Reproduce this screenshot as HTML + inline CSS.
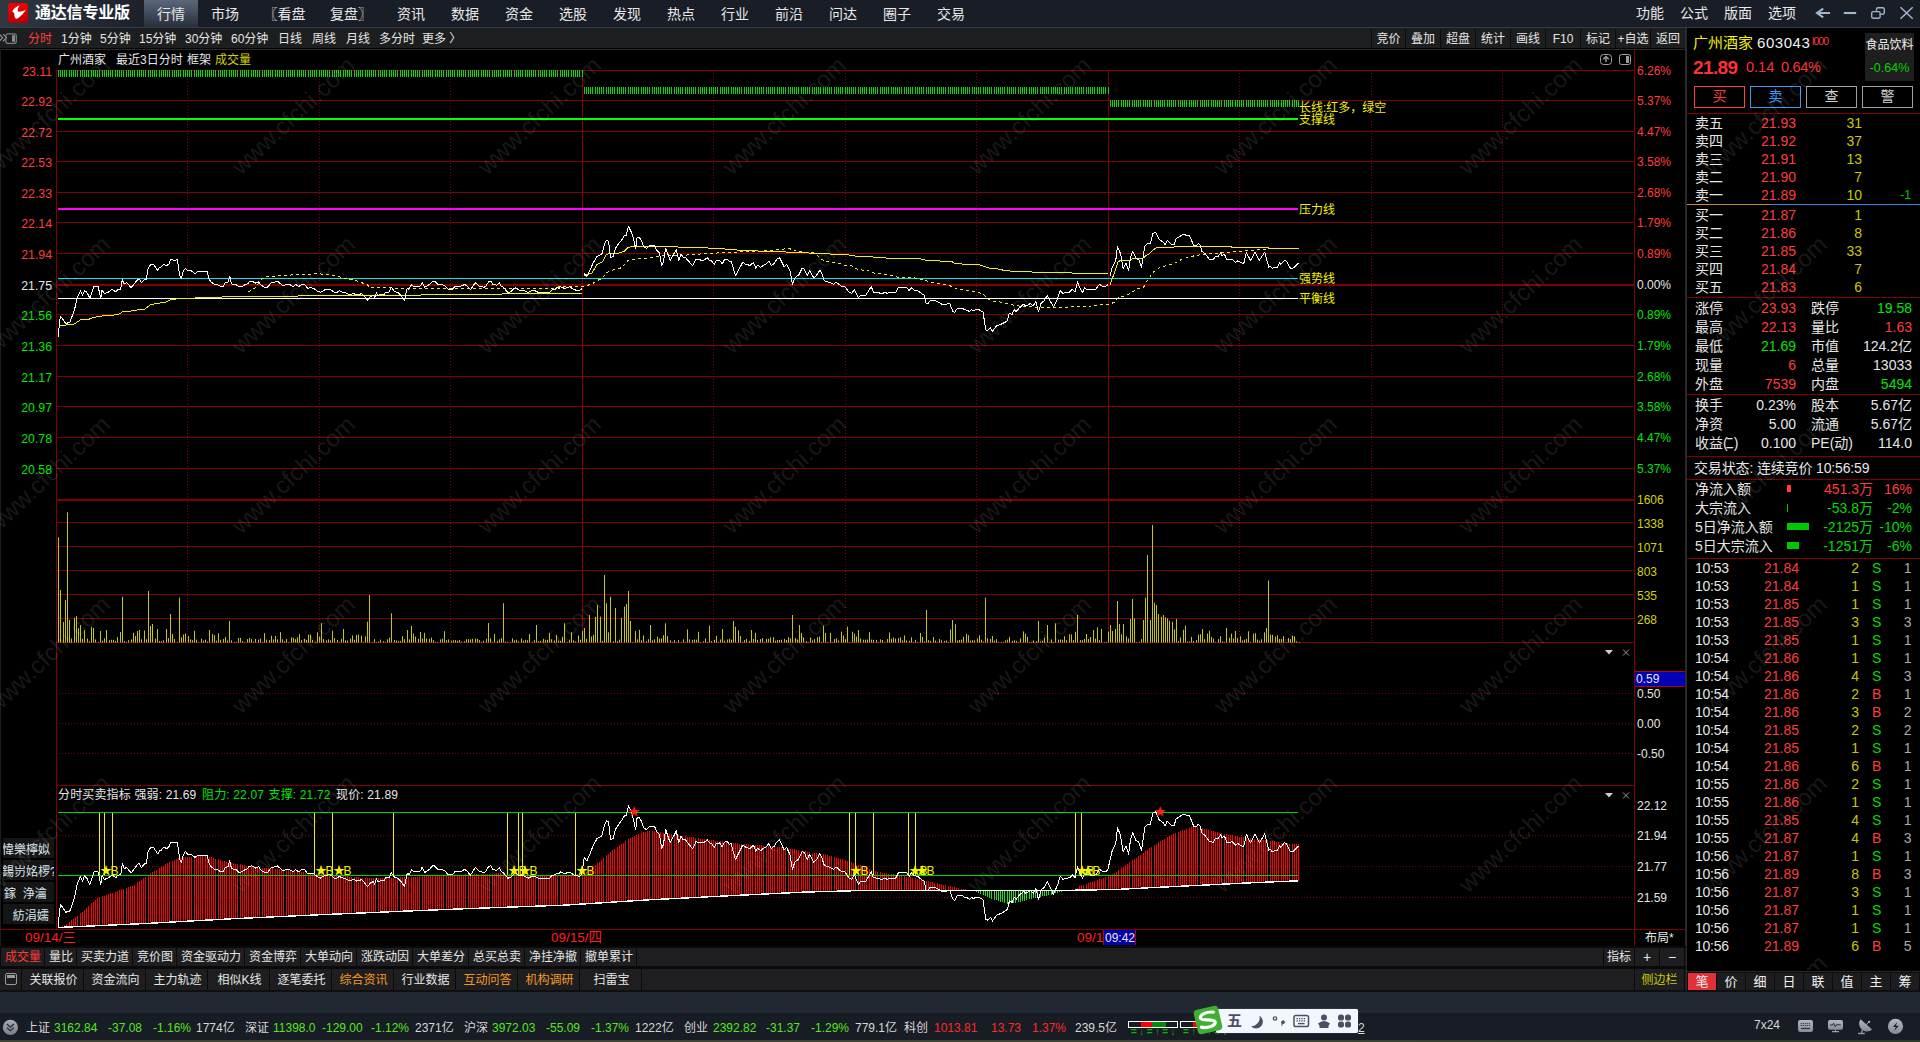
<!DOCTYPE html><html lang="zh-CN"><head><meta charset="utf-8"><title>通达信专业版</title><style>
html,body{margin:0;padding:0;background:#000;}
body{width:1920px;height:1042px;overflow:hidden;position:relative;font-family:"Liberation Sans","Noto Sans CJK SC",sans-serif;}
.t{position:absolute;white-space:nowrap;line-height:1;}
.r{position:absolute;}
svg{position:absolute;left:0;top:0;}
.b{font-weight:bold;}
.wm{position:absolute;white-space:nowrap;line-height:1;font-size:24px;color:rgba(255,255,255,0.115);transform-origin:0 20px;transform:rotate(-43.2deg);}
</style></head><body>
<div class="r" style="left:0px;top:0px;width:1920px;height:27px;background:#191d26;background:linear-gradient(90deg,#2f3843 0px,#272e38 60px,#1d212a 140px,#191d26 200px,#191d26 100%);"></div>
<div class="r" style="left:0px;top:27px;width:1920px;height:1px;background:#343c48;"></div>
<div class="r" style="left:144px;top:0px;width:54px;height:27px;background:#3a4350;background:linear-gradient(180deg,#5b677a 0%,#414b5b 50%,#29303b 100%);"></div>
<svg width="40" height="28" viewBox="0 0 40 28"><defs><linearGradient id="lg" x1="0" y1="0" x2="0" y2="1"><stop offset="0" stop-color="#f40000"/><stop offset="1" stop-color="#b80000"/></linearGradient></defs><rect x="8" y="3" width="20" height="20" rx="3" fill="url(#lg)"/><path d="M20 5.2 C16.5 6.2 13.2 8.6 12.2 11.6 C13 12.4 13.8 12.6 14.3 13.4 C14.2 15.2 14.6 17.2 15.6 18.6 C16.4 18.9 17.6 18.7 18.4 18 C21 15.8 24.2 12.6 26 9.4 C23.8 10.8 21 11.9 18 11.6 C17.2 9.6 18.2 7 20 5.2 Z" fill="#fff"/></svg>
<div class="t " style="left:35px;top:4.5px;color:#ffffff;font-size:16px;font-weight:bold;letter-spacing:-0.2px;">通达信专业版</div>
<div class="t " style="left:157px;top:7px;color:#e8e8e8;font-size:14px;">行情</div>
<div class="t " style="left:211px;top:7px;color:#e8e8e8;font-size:14px;">市场</div>
<div class="t " style="left:263.5px;top:7px;color:#e8e8e8;font-size:14px;">〖看盘</div>
<div class="t " style="left:330px;top:7px;color:#e8e8e8;font-size:14px;">复盘〗</div>
<div class="t " style="left:397px;top:7px;color:#e8e8e8;font-size:14px;">资讯</div>
<div class="t " style="left:451px;top:7px;color:#e8e8e8;font-size:14px;">数据</div>
<div class="t " style="left:505px;top:7px;color:#e8e8e8;font-size:14px;">资金</div>
<div class="t " style="left:559px;top:7px;color:#e8e8e8;font-size:14px;">选股</div>
<div class="t " style="left:613px;top:7px;color:#e8e8e8;font-size:14px;">发现</div>
<div class="t " style="left:667px;top:7px;color:#e8e8e8;font-size:14px;">热点</div>
<div class="t " style="left:721px;top:7px;color:#e8e8e8;font-size:14px;">行业</div>
<div class="t " style="left:775px;top:7px;color:#e8e8e8;font-size:14px;">前沿</div>
<div class="t " style="left:829px;top:7px;color:#e8e8e8;font-size:14px;">问达</div>
<div class="t " style="left:883px;top:7px;color:#e8e8e8;font-size:14px;">圈子</div>
<div class="t " style="left:937px;top:7px;color:#e8e8e8;font-size:14px;">交易</div>
<div class="t " style="left:1636px;top:6px;color:#e8e8e8;font-size:14px;">功能</div>
<div class="t " style="left:1680px;top:6px;color:#e8e8e8;font-size:14px;">公式</div>
<div class="t " style="left:1724px;top:6px;color:#e8e8e8;font-size:14px;">版面</div>
<div class="t " style="left:1768px;top:6px;color:#e8e8e8;font-size:14px;">选项</div>
<svg width="1920" height="28" viewBox="0 0 1920 28" fill="none" stroke="#a4b4ce" stroke-width="2"><path d="M1830 13 H1818 M1823.2 8.6 L1817 13 L1823.2 17.4" stroke-width="2.1" stroke-linejoin="miter"/><path d="M1843.8 13 H1856.2" stroke-width="2.1"/><path d="M1876.5 10.8 V9.2 a1.4 1.4 0 0 1 1.4 -1.4 h5 a1.4 1.4 0 0 1 1.4 1.4 v3.6 a1.4 1.4 0 0 1 -1.4 1.4 h-1.8" stroke-width="1.4"/><rect x="1871.7" y="11.6" width="8.4" height="6.6" rx="1.4" stroke-width="1.4"/><path d="M1900.5 7.2 L1912.7 18.8 M1912.7 7.2 L1900.5 18.8" stroke-width="1.5"/></svg>
<div class="r" style="left:0px;top:28px;width:1686px;height:20px;background:#1d1e20;"></div>
<div class="r" style="left:0px;top:48px;width:1686px;height:1px;background:#060606;"></div>
<div class="r" style="left:0px;top:49px;width:1686px;height:1px;background:#2a2a2a;"></div>
<svg width="30" height="50" viewBox="0 0 30 50" fill="none" stroke="#7e7e7e" stroke-width="1.2"><path d="M-0.8 34 l3.4 3.7 l-3.4 3.7 M3 34 l3.4 3.7 l-3.4 3.7" stroke="#9c9c9c" stroke-width="1.1"/><rect x="5.9" y="33.9" width="10.4" height="9.4" rx="2"/><rect x="12" y="35.2" width="3" height="6.6" fill="#8a8a8a" stroke="none"/></svg>
<div class="t " style="left:28px;top:33px;color:#ff3c3c;font-size:12px;">分时</div>
<div class="t " style="left:61px;top:33px;color:#e6e6e6;font-size:12px;">1分钟</div>
<div class="t " style="left:100px;top:33px;color:#e6e6e6;font-size:12px;">5分钟</div>
<div class="t " style="left:139px;top:33px;color:#e6e6e6;font-size:12px;">15分钟</div>
<div class="t " style="left:185px;top:33px;color:#e6e6e6;font-size:12px;">30分钟</div>
<div class="t " style="left:231px;top:33px;color:#e6e6e6;font-size:12px;">60分钟</div>
<div class="t " style="left:278px;top:33px;color:#e6e6e6;font-size:12px;">日线</div>
<div class="t " style="left:312px;top:33px;color:#e6e6e6;font-size:12px;">周线</div>
<div class="t " style="left:346px;top:33px;color:#e6e6e6;font-size:12px;">月线</div>
<div class="t " style="left:379px;top:33px;color:#e6e6e6;font-size:12px;">多分时</div>
<div class="t " style="left:422px;top:33px;color:#e6e6e6;font-size:12px;">更多 〉</div>
<div class="r" style="left:1371px;top:29px;width:1px;height:19px;background:#0c0c0c;"></div>
<div class="t " style="left:1372px;top:33px;color:#e6e6e6;font-size:12px;width:33px;text-align:center;">竞价</div>
<div class="r" style="left:1405px;top:29px;width:1px;height:19px;background:#0c0c0c;"></div>
<div class="t " style="left:1406px;top:33px;color:#e6e6e6;font-size:12px;width:34px;text-align:center;">叠加</div>
<div class="r" style="left:1440px;top:29px;width:1px;height:19px;background:#0c0c0c;"></div>
<div class="t " style="left:1441px;top:33px;color:#e6e6e6;font-size:12px;width:34px;text-align:center;">超盘</div>
<div class="r" style="left:1475px;top:29px;width:1px;height:19px;background:#0c0c0c;"></div>
<div class="t " style="left:1476px;top:33px;color:#e6e6e6;font-size:12px;width:34px;text-align:center;">统计</div>
<div class="r" style="left:1510px;top:29px;width:1px;height:19px;background:#0c0c0c;"></div>
<div class="t " style="left:1511px;top:33px;color:#e6e6e6;font-size:12px;width:34px;text-align:center;">画线</div>
<div class="r" style="left:1545px;top:29px;width:1px;height:19px;background:#0c0c0c;"></div>
<div class="t " style="left:1546px;top:33px;color:#e6e6e6;font-size:12px;width:34px;text-align:center;">F10</div>
<div class="r" style="left:1580px;top:29px;width:1px;height:19px;background:#0c0c0c;"></div>
<div class="t " style="left:1581px;top:33px;color:#e6e6e6;font-size:12px;width:34px;text-align:center;">标记</div>
<div class="r" style="left:1615px;top:29px;width:1px;height:19px;background:#0c0c0c;"></div>
<div class="t " style="left:1616px;top:33px;color:#e6e6e6;font-size:12px;width:34px;text-align:center;">+自选</div>
<div class="r" style="left:1650px;top:29px;width:1px;height:19px;background:#0c0c0c;"></div>
<div class="t " style="left:1651px;top:33px;color:#e6e6e6;font-size:12px;width:34px;text-align:center;">返回</div>
<div class="r" style="left:1685px;top:28px;width:1px;height:21px;background:#0c0c0c;"></div>
<svg width="1686" height="946" viewBox="0 0 1686 946"><rect x="0" y="50" width="1" height="896" fill="#1c1c1c"/><rect x="56" y="70" width="1578" height="1" fill="#800000" /><rect x="56" y="100" width="1578" height="1" fill="#800000" /><rect x="56" y="131" width="1578" height="1" fill="#800000" /><rect x="56" y="161" width="1578" height="1" fill="#800000" /><rect x="56" y="192" width="1578" height="1" fill="#800000" /><rect x="56" y="222" width="1578" height="1" fill="#800000" /><rect x="56" y="253" width="1578" height="1" fill="#800000" /><rect x="56" y="314" width="1578" height="1" fill="#800000" /><rect x="56" y="345" width="1578" height="1" fill="#800000" /><rect x="56" y="376" width="1578" height="1" fill="#800000" /><rect x="56" y="406" width="1578" height="1" fill="#800000" /><rect x="56" y="437" width="1578" height="1" fill="#800000" /><rect x="56" y="468" width="1578" height="1" fill="#800000" /><rect x="56" y="284" width="1578" height="2" fill="#800000" /><rect x="56" y="499" width="1578" height="2" fill="#800000" /><rect x="56" y="522" width="1578" height="1" fill="#800000" /><rect x="56" y="546" width="1578" height="1" fill="#800000" /><rect x="56" y="570" width="1578" height="1" fill="#800000" /><rect x="56" y="594" width="1578" height="1" fill="#800000" /><rect x="56" y="618" width="1578" height="1" fill="#800000" /><rect x="56" y="642" width="1578" height="1" fill="#800000" /><rect x="56" y="785" width="1578" height="1" fill="#800000" /><rect x="0" y="929" width="1686" height="1" fill="#800000" /><rect x="56" y="70" width="1" height="859" fill="#800000"/><rect x="1634" y="50" width="1" height="896" fill="#800000"/><rect x="582" y="70" width="1" height="573" fill="#800000"/><rect x="1108" y="70" width="1" height="573" fill="#800000"/><line x1="187.5" y1="79" x2="187.5" y2="642" stroke="#800000" stroke-width="1" stroke-dasharray="1 2" shape-rendering="crispEdges"/><line x1="319.5" y1="79" x2="319.5" y2="642" stroke="#800000" stroke-width="1" stroke-dasharray="1 2" shape-rendering="crispEdges"/><line x1="450.5" y1="79" x2="450.5" y2="642" stroke="#800000" stroke-width="1" stroke-dasharray="1 2" shape-rendering="crispEdges"/><line x1="713.5" y1="73" x2="713.5" y2="642" stroke="#800000" stroke-width="1" stroke-dasharray="1 2" shape-rendering="crispEdges"/><line x1="845.5" y1="73" x2="845.5" y2="642" stroke="#800000" stroke-width="1" stroke-dasharray="1 2" shape-rendering="crispEdges"/><line x1="976.5" y1="73" x2="976.5" y2="642" stroke="#800000" stroke-width="1" stroke-dasharray="1 2" shape-rendering="crispEdges"/><line x1="1239.5" y1="73" x2="1239.5" y2="642" stroke="#800000" stroke-width="1" stroke-dasharray="1 2" shape-rendering="crispEdges"/><line x1="1371.5" y1="73" x2="1371.5" y2="642" stroke="#800000" stroke-width="1" stroke-dasharray="1 2" shape-rendering="crispEdges"/><line x1="1502.5" y1="73" x2="1502.5" y2="642" stroke="#800000" stroke-width="1" stroke-dasharray="1 2" shape-rendering="crispEdges"/><line x1="59" y1="693.5" x2="1634" y2="693.5" stroke="#800000" stroke-width="1" stroke-dasharray="1 2" shape-rendering="crispEdges"/><line x1="59" y1="723.5" x2="1634" y2="723.5" stroke="#800000" stroke-width="1" stroke-dasharray="1 2" shape-rendering="crispEdges"/><line x1="59" y1="753.5" x2="1634" y2="753.5" stroke="#800000" stroke-width="1" stroke-dasharray="1 2" shape-rendering="crispEdges"/><line x1="59" y1="835.5" x2="1634" y2="835.5" stroke="#800000" stroke-width="1" stroke-dasharray="1 2" shape-rendering="crispEdges"/><line x1="59" y1="866.5" x2="1634" y2="866.5" stroke="#800000" stroke-width="1" stroke-dasharray="1 2" shape-rendering="crispEdges"/><line x1="59" y1="897.5" x2="1634" y2="897.5" stroke="#800000" stroke-width="1" stroke-dasharray="1 2" shape-rendering="crispEdges"/><path d="M58 70v7M60 70v7M62 70v7M64 70v7M66 70v7M69 70v7M71 70v7M73 70v7M75 70v7M77 70v7M80 70v7M82 70v7M84 70v7M86 70v7M88 70v7M91 70v7M93 70v7M95 70v7M97 70v7M99 70v7M102 70v7M104 70v7M106 70v7M108 70v7M110 70v7M112 70v7M115 70v7M117 70v7M119 70v7M121 70v7M123 70v7M126 70v7M128 70v7M130 70v7M132 70v7M134 70v7M137 70v7M139 70v7M141 70v7M143 70v7M145 70v7M148 70v7M150 70v7M152 70v7M154 70v7M156 70v7M159 70v7M161 70v7M163 70v7M165 70v7M167 70v7M169 70v7M172 70v7M174 70v7M176 70v7M178 70v7M180 70v7M183 70v7M185 70v7M187 70v7M189 70v7M191 70v7M194 70v7M196 70v7M198 70v7M200 70v7M202 70v7M205 70v7M207 70v7M209 70v7M211 70v7M213 70v7M215 70v7M218 70v7M220 70v7M222 70v7M224 70v7M226 70v7M229 70v7M231 70v7M233 70v7M235 70v7M237 70v7M240 70v7M242 70v7M244 70v7M246 70v7M248 70v7M251 70v7M253 70v7M255 70v7M257 70v7M259 70v7M262 70v7M264 70v7M266 70v7M268 70v7M270 70v7M272 70v7M275 70v7M277 70v7M279 70v7M281 70v7M283 70v7M286 70v7M288 70v7M290 70v7M292 70v7M294 70v7M297 70v7M299 70v7M301 70v7M303 70v7M305 70v7M308 70v7M310 70v7M312 70v7M314 70v7M316 70v7M319 70v7M321 70v7M323 70v7M325 70v7M327 70v7M329 70v7M332 70v7M334 70v7M336 70v7M338 70v7M340 70v7M343 70v7M345 70v7M347 70v7M349 70v7M351 70v7M354 70v7M356 70v7M358 70v7M360 70v7M362 70v7M365 70v7M367 70v7M369 70v7M371 70v7M373 70v7M375 70v7M378 70v7M380 70v7M382 70v7M384 70v7M386 70v7M389 70v7M391 70v7M393 70v7M395 70v7M397 70v7M400 70v7M402 70v7M404 70v7M406 70v7M408 70v7M411 70v7M413 70v7M415 70v7M417 70v7M419 70v7M422 70v7M424 70v7M426 70v7M428 70v7M430 70v7M432 70v7M435 70v7M437 70v7M439 70v7M441 70v7M443 70v7M446 70v7M448 70v7M450 70v7M452 70v7M454 70v7M457 70v7M459 70v7M461 70v7M463 70v7M465 70v7M468 70v7M470 70v7M472 70v7M474 70v7M476 70v7M478 70v7M481 70v7M483 70v7M485 70v7M487 70v7M489 70v7M492 70v7M494 70v7M496 70v7M498 70v7M500 70v7M503 70v7M505 70v7M507 70v7M509 70v7M511 70v7M514 70v7M516 70v7M518 70v7M520 70v7M522 70v7M525 70v7M527 70v7M529 70v7M531 70v7M533 70v7M535 70v7M538 70v7M540 70v7M542 70v7M544 70v7M546 70v7M549 70v7M551 70v7M553 70v7M555 70v7M557 70v7M560 70v7M562 70v7M564 70v7M566 70v7M568 70v7M571 70v7M573 70v7M575 70v7M577 70v7M579 70v7M582 70v7" stroke="#00e000" stroke-width="1" fill="none" shape-rendering="crispEdges" transform="translate(0.5,0)"/><path d="M584 87v7M586 87v7M588 87v7M590 87v7M592 87v7M595 87v7M597 87v7M599 87v7M601 87v7M603 87v7M606 87v7M608 87v7M610 87v7M612 87v7M614 87v7M617 87v7M619 87v7M621 87v7M623 87v7M625 87v7M628 87v7M630 87v7M632 87v7M634 87v7M636 87v7M638 87v7M641 87v7M643 87v7M645 87v7M647 87v7M649 87v7M652 87v7M654 87v7M656 87v7M658 87v7M660 87v7M663 87v7M665 87v7M667 87v7M669 87v7M671 87v7M674 87v7M676 87v7M678 87v7M680 87v7M682 87v7M685 87v7M687 87v7M689 87v7M691 87v7M693 87v7M695 87v7M698 87v7M700 87v7M702 87v7M704 87v7M706 87v7M709 87v7M711 87v7M713 87v7M715 87v7M717 87v7M720 87v7M722 87v7M724 87v7M726 87v7M728 87v7M731 87v7M733 87v7M735 87v7M737 87v7M739 87v7M741 87v7M744 87v7M746 87v7M748 87v7M750 87v7M752 87v7M755 87v7M757 87v7M759 87v7M761 87v7M763 87v7M766 87v7M768 87v7M770 87v7M772 87v7M774 87v7M777 87v7M779 87v7M781 87v7M783 87v7M785 87v7M788 87v7M790 87v7M792 87v7M794 87v7M796 87v7M798 87v7M801 87v7M803 87v7M805 87v7M807 87v7M809 87v7M812 87v7M814 87v7M816 87v7M818 87v7M820 87v7M823 87v7M825 87v7M827 87v7M829 87v7M831 87v7M834 87v7M836 87v7M838 87v7M840 87v7M842 87v7M845 87v7M847 87v7M849 87v7M851 87v7M853 87v7M855 87v7M858 87v7M860 87v7M862 87v7M864 87v7M866 87v7M869 87v7M871 87v7M873 87v7M875 87v7M877 87v7M880 87v7M882 87v7M884 87v7M886 87v7M888 87v7M891 87v7M893 87v7M895 87v7M897 87v7M899 87v7M901 87v7M904 87v7M906 87v7M908 87v7M910 87v7M912 87v7M915 87v7M917 87v7M919 87v7M921 87v7M923 87v7M926 87v7M928 87v7M930 87v7M932 87v7M934 87v7M937 87v7M939 87v7M941 87v7M943 87v7M945 87v7M948 87v7M950 87v7M952 87v7M954 87v7M956 87v7M958 87v7M961 87v7M963 87v7M965 87v7M967 87v7M969 87v7M972 87v7M974 87v7M976 87v7M978 87v7M980 87v7M983 87v7M985 87v7M987 87v7M989 87v7M991 87v7M994 87v7M996 87v7M998 87v7M1000 87v7M1002 87v7M1004 87v7M1007 87v7M1009 87v7M1011 87v7M1013 87v7M1015 87v7M1018 87v7M1020 87v7M1022 87v7M1024 87v7M1026 87v7M1029 87v7M1031 87v7M1033 87v7M1035 87v7M1037 87v7M1040 87v7M1042 87v7M1044 87v7M1046 87v7M1048 87v7M1051 87v7M1053 87v7M1055 87v7M1057 87v7M1059 87v7M1061 87v7M1064 87v7M1066 87v7M1068 87v7M1070 87v7M1072 87v7M1075 87v7M1077 87v7M1079 87v7M1081 87v7M1083 87v7M1086 87v7M1088 87v7M1090 87v7M1092 87v7M1094 87v7M1097 87v7M1099 87v7M1101 87v7M1103 87v7M1105 87v7M1108 87v7" stroke="#00e000" stroke-width="1" fill="none" shape-rendering="crispEdges" transform="translate(0.5,0)"/><path d="M1110 100v7M1112 100v7M1114 100v7M1116 100v7M1118 100v7M1121 100v7M1123 100v7M1125 100v7M1127 100v7M1129 100v7M1132 100v7M1134 100v7M1136 100v7M1138 100v7M1140 100v7M1143 100v7M1145 100v7M1147 100v7M1149 100v7M1151 100v7M1154 100v7M1156 100v7M1158 100v7M1160 100v7M1162 100v7M1164 100v7M1167 100v7M1169 100v7M1171 100v7M1173 100v7M1175 100v7M1178 100v7M1180 100v7M1182 100v7M1184 100v7M1186 100v7M1189 100v7M1191 100v7M1193 100v7M1195 100v7M1197 100v7M1200 100v7M1202 100v7M1204 100v7M1206 100v7M1208 100v7M1211 100v7M1213 100v7M1215 100v7M1217 100v7M1219 100v7M1221 100v7M1224 100v7M1226 100v7M1228 100v7M1230 100v7M1232 100v7M1235 100v7M1237 100v7M1239 100v7M1241 100v7M1243 100v7M1246 100v7M1248 100v7M1250 100v7M1252 100v7M1254 100v7M1257 100v7M1259 100v7M1261 100v7M1263 100v7M1265 100v7M1267 100v7M1270 100v7M1272 100v7M1274 100v7M1276 100v7M1278 100v7M1281 100v7M1283 100v7M1285 100v7M1287 100v7M1289 100v7M1292 100v7M1294 100v7M1296 100v7M1298 100v7" stroke="#00e000" stroke-width="1" fill="none" shape-rendering="crispEdges" transform="translate(0.5,0)"/><rect x="58" y="118" width="1240" height="2" fill="#00ff00" /><rect x="58" y="208" width="1240" height="2" fill="#ff00ff" /><rect x="58" y="278" width="1240" height="1" fill="#00e6e6" /><rect x="58" y="298" width="1240" height="1" fill="#ffffff" /><path d="M58 537.3V642.5M60 590.0V642.5M63 622.0V642.5M65 600.0V642.5M67 512.3V642.5M69 620.0V642.5M71 638.5V642.5M74 617.7V642.5M76 616.0V642.5M78 628.0V642.5M80 625.0V642.5M82 638.8V642.5M84 630.3V642.5M87 638.6V642.5M89 641.4V642.5M91 626.7V642.5M93 628.0V642.5M95 639.4V642.5M98 641.9V642.5M100 631.0V642.5M102 640.8V642.5M104 638.3V642.5M106 630.0V642.5M109 640.2V642.5M111 639.8V642.5M113 639.8V642.5M115 640.9V642.5M117 637.1V642.5M120 632.0V642.5M122 596.7V642.5M124 641.0V642.5M126 641.9V642.5M128 640.2V642.5M131 639.5V642.5M133 632.8V642.5M135 636.1V642.5M137 631.0V642.5M139 630.0V642.5M141 639.3V642.5M144 630.5V642.5M146 639.3V642.5M148 591.0V642.5M150 626.0V642.5M152 624.0V642.5M155 638.7V642.5M157 629.0V642.5M159 641.0V642.5M161 641.2V642.5M163 640.3V642.5M166 629.0V642.5M168 638.1V642.5M170 614.0V642.5M172 634.0V642.5M174 639.0V642.5M177 641.9V642.5M179 597.7V642.5M181 637.3V642.5M183 634.4V642.5M185 633.6V642.5M188 636.0V642.5M190 639.3V642.5M192 640.2V642.5M194 630.7V642.5M196 639.6V642.5M198 641.9V642.5M201 638.7V642.5M203 640.6V642.5M205 639.6V642.5M207 641.5V642.5M209 630.0V642.5M212 634.0V642.5M214 635.1V642.5M216 640.6V642.5M218 633.2V642.5M220 639.8V642.5M223 639.0V642.5M225 637.0V642.5M227 640.5V642.5M229 621.0V642.5M231 640.3V642.5M234 641.9V642.5M236 641.9V642.5M238 638.0V642.5M240 638.0V642.5M242 641.2V642.5M244 641.9V642.5M247 639.1V642.5M249 638.0V642.5M251 639.1V642.5M253 641.6V642.5M255 638.8V642.5M258 639.8V642.5M260 638.5V642.5M262 641.9V642.5M264 633.1V642.5M266 639.7V642.5M269 640.1V642.5M271 635.7V642.5M273 639.5V642.5M275 636.0V642.5M277 639.4V642.5M280 632.1V642.5M282 639.3V642.5M284 641.3V642.5M286 638.9V642.5M288 641.9V642.5M291 637.5V642.5M293 637.8V642.5M295 639.2V642.5M297 637.3V642.5M299 634.1V642.5M301 640.2V642.5M304 638.8V642.5M306 640.0V642.5M308 634.8V642.5M310 634.6V642.5M312 640.1V642.5M315 641.9V642.5M317 632.4V642.5M319 636.5V642.5M321 623.3V642.5M323 639.0V642.5M326 640.4V642.5M328 639.3V642.5M330 640.4V642.5M332 630.7V642.5M334 638.2V642.5M337 639.9V642.5M339 641.9V642.5M341 638.7V642.5M343 629.0V642.5M345 640.4V642.5M347 640.5V642.5M350 638.6V642.5M352 635.4V642.5M354 639.8V642.5M356 634.9V642.5M358 634.6V642.5M361 635.7V642.5M363 641.9V642.5M365 636.3V642.5M367 621.7V642.5M369 595.0V642.5M372 641.9V642.5M374 639.2V642.5M376 641.9V642.5M378 641.5V642.5M380 639.6V642.5M383 641.1V642.5M385 641.9V642.5M387 639.3V642.5M389 637.7V642.5M391 613.3V642.5M394 639.9V642.5M396 640.5V642.5M398 640.9V642.5M400 640.9V642.5M402 636.2V642.5M404 639.2V642.5M407 630.0V642.5M409 639.4V642.5M411 626.0V642.5M413 633.7V642.5M415 636.6V642.5M418 639.0V642.5M420 632.0V642.5M422 638.6V642.5M424 632.8V642.5M426 638.5V642.5M429 639.0V642.5M431 637.6V642.5M433 640.1V642.5M435 641.9V642.5M437 641.9V642.5M440 639.4V642.5M442 638.7V642.5M444 631.2V642.5M446 640.2V642.5M448 639.4V642.5M451 640.7V642.5M453 640.2V642.5M455 640.1V642.5M457 640.8V642.5M459 640.0V642.5M461 641.5V642.5M464 641.2V642.5M466 639.2V642.5M468 639.2V642.5M470 639.4V642.5M472 638.8V642.5M475 638.7V642.5M477 638.8V642.5M479 640.1V642.5M481 641.9V642.5M483 640.6V642.5M486 638.7V642.5M488 623.0V642.5M490 638.5V642.5M492 641.9V642.5M494 634.0V642.5M497 640.8V642.5M499 639.3V642.5M501 638.2V642.5M503 603.3V642.5M505 641.5V642.5M507 641.9V642.5M510 641.9V642.5M512 638.4V642.5M514 640.3V642.5M516 639.7V642.5M518 641.3V642.5M521 638.4V642.5M523 640.7V642.5M525 639.9V642.5M527 640.2V642.5M529 634.1V642.5M532 641.9V642.5M534 640.2V642.5M536 625.0V642.5M538 641.1V642.5M540 640.9V642.5M543 638.8V642.5M545 639.7V642.5M547 639.9V642.5M549 632.9V642.5M551 639.3V642.5M554 640.5V642.5M556 635.2V642.5M558 640.6V642.5M560 640.9V642.5M562 636.7V642.5M564 623.3V642.5M567 641.9V642.5M569 639.7V642.5M571 632.2V642.5M573 640.3V642.5M575 641.4V642.5M578 635.5V642.5M580 639.8V642.5M582 631.0V642.5M584 628.0V642.5M586 638.8V642.5M589 615.0V642.5M591 636.5V642.5M593 634.9V642.5M595 617.0V642.5M597 605.0V642.5M600 616.7V642.5M602 640.9V642.5M604 575.0V642.5M606 603.3V642.5M608 632.3V642.5M610 596.7V642.5M613 641.4V642.5M615 608.0V642.5M617 641.1V642.5M619 639.6V642.5M621 618.0V642.5M624 606.7V642.5M626 604.0V642.5M628 591.0V642.5M630 621.0V642.5M632 641.9V642.5M635 631.0V642.5M637 639.4V642.5M639 629.8V642.5M641 640.3V642.5M643 635.5V642.5M646 641.2V642.5M648 639.2V642.5M650 625.0V642.5M652 640.3V642.5M654 639.3V642.5M657 636.6V642.5M659 638.6V642.5M661 638.5V642.5M663 635.2V642.5M665 623.3V642.5M667 636.2V642.5M670 640.4V642.5M672 641.9V642.5M674 640.2V642.5M676 641.9V642.5M678 640.1V642.5M681 641.9V642.5M683 639.4V642.5M685 641.9V642.5M687 629.4V642.5M689 639.3V642.5M692 639.9V642.5M694 639.5V642.5M696 639.6V642.5M698 631.8V642.5M700 641.9V642.5M703 641.3V642.5M705 638.5V642.5M707 641.9V642.5M709 625.7V642.5M711 641.1V642.5M714 639.8V642.5M716 635.8V642.5M718 641.9V642.5M720 639.4V642.5M722 629.0V642.5M724 640.7V642.5M727 639.5V642.5M729 638.7V642.5M731 639.7V642.5M733 621.0V642.5M735 626.7V642.5M738 630.4V642.5M740 636.0V642.5M742 641.9V642.5M744 640.0V642.5M746 638.9V642.5M749 640.8V642.5M751 630.0V642.5M753 639.0V642.5M755 632.7V642.5M757 639.9V642.5M760 639.1V642.5M762 638.2V642.5M764 641.9V642.5M766 638.9V642.5M768 638.8V642.5M770 637.5V642.5M773 637.2V642.5M775 640.7V642.5M777 640.0V642.5M779 640.0V642.5M781 639.7V642.5M784 638.9V642.5M786 640.0V642.5M788 637.2V642.5M790 638.3V642.5M792 615.0V642.5M795 638.0V642.5M797 639.6V642.5M799 625.0V642.5M801 632.8V642.5M803 637.5V642.5M806 641.3V642.5M808 641.9V642.5M810 637.7V642.5M812 640.4V642.5M814 639.1V642.5M817 637.2V642.5M819 636.6V642.5M821 641.9V642.5M823 625.7V642.5M825 633.1V642.5M827 641.9V642.5M830 632.7V642.5M832 641.9V642.5M834 639.1V642.5M836 638.4V642.5M838 640.5V642.5M841 631.6V642.5M843 635.5V642.5M845 639.2V642.5M847 626.7V642.5M849 641.9V642.5M852 631.7V642.5M854 633.7V642.5M856 636.6V642.5M858 630.0V642.5M860 638.4V642.5M863 639.7V642.5M865 639.6V642.5M867 639.7V642.5M869 632.1V642.5M871 639.6V642.5M873 639.8V642.5M876 639.9V642.5M878 641.9V642.5M880 639.4V642.5M882 640.0V642.5M884 641.9V642.5M887 639.1V642.5M889 632.5V642.5M891 638.8V642.5M893 637.5V642.5M895 638.6V642.5M898 638.2V642.5M900 637.3V642.5M902 640.4V642.5M904 635.5V642.5M906 640.4V642.5M909 640.9V642.5M911 637.3V642.5M913 641.9V642.5M915 639.8V642.5M917 641.9V642.5M920 633.0V642.5M922 636.9V642.5M924 641.4V642.5M926 610.0V642.5M928 640.1V642.5M930 640.9V642.5M933 637.0V642.5M935 640.5V642.5M937 641.9V642.5M939 638.9V642.5M941 640.3V642.5M944 640.9V642.5M946 640.5V642.5M948 641.9V642.5M950 629.3V642.5M952 620.0V642.5M955 624.3V642.5M957 640.5V642.5M959 640.0V642.5M961 639.6V642.5M963 636.8V642.5M966 633.9V642.5M968 635.3V642.5M970 640.6V642.5M972 640.2V642.5M974 640.3V642.5M977 638.4V642.5M979 635.3V642.5M981 639.7V642.5M983 641.5V642.5M985 597.7V642.5M987 638.2V642.5M990 639.0V642.5M992 636.0V642.5M994 640.7V642.5M996 639.2V642.5M998 641.9V642.5M1001 641.9V642.5M1003 641.9V642.5M1005 640.3V642.5M1007 639.6V642.5M1009 636.9V642.5M1012 640.8V642.5M1014 640.3V642.5M1016 640.8V642.5M1018 641.9V642.5M1020 638.4V642.5M1023 631.4V642.5M1025 633.6V642.5M1027 636.9V642.5M1029 641.9V642.5M1031 641.9V642.5M1033 640.5V642.5M1036 641.1V642.5M1038 621.0V642.5M1040 641.3V642.5M1042 640.9V642.5M1044 637.6V642.5M1047 625.0V642.5M1049 641.9V642.5M1051 639.4V642.5M1053 641.9V642.5M1055 623.3V642.5M1058 639.7V642.5M1060 639.4V642.5M1062 639.8V642.5M1064 636.2V642.5M1066 640.2V642.5M1069 634.3V642.5M1071 634.4V642.5M1073 640.1V642.5M1075 631.8V642.5M1077 615.0V642.5M1080 640.1V642.5M1082 640.2V642.5M1084 638.9V642.5M1086 634.0V642.5M1088 639.0V642.5M1090 637.0V642.5M1093 630.0V642.5M1095 638.7V642.5M1097 627.3V642.5M1099 640.1V642.5M1101 629.0V642.5M1104 641.9V642.5M1106 641.9V642.5M1108 631.7V642.5M1110 625.0V642.5M1112 631.0V642.5M1115 629.0V642.5M1117 601.0V642.5M1119 624.0V642.5M1121 634.3V642.5M1123 624.0V642.5M1126 636.4V642.5M1128 638.5V642.5M1130 619.0V642.5M1132 599.0V642.5M1134 618.3V642.5M1136 641.9V642.5M1139 641.9V642.5M1141 639.2V642.5M1143 620.0V642.5M1145 597.7V642.5M1147 555.0V642.5M1150 620.0V642.5M1152 525.0V642.5M1154 602.7V642.5M1156 605.0V642.5M1158 614.0V642.5M1161 616.7V642.5M1163 615.0V642.5M1165 617.3V642.5M1167 618.3V642.5M1169 620.7V642.5M1172 621.7V642.5M1174 629.4V642.5M1176 619.0V642.5M1178 641.1V642.5M1180 637.5V642.5M1183 629.8V642.5M1185 625.7V642.5M1187 641.5V642.5M1189 641.4V642.5M1191 636.9V642.5M1193 640.9V642.5M1196 640.0V642.5M1198 634.7V642.5M1200 634.2V642.5M1202 629.0V642.5M1204 639.1V642.5M1207 633.5V642.5M1209 630.7V642.5M1211 636.9V642.5M1213 638.6V642.5M1215 641.9V642.5M1218 639.1V642.5M1220 636.3V642.5M1222 641.3V642.5M1224 641.9V642.5M1226 628.0V642.5M1229 637.7V642.5M1231 633.6V642.5M1233 638.5V642.5M1235 630.9V642.5M1237 638.1V642.5M1240 636.2V642.5M1242 640.5V642.5M1244 639.6V642.5M1246 638.9V642.5M1248 631.3V642.5M1250 641.9V642.5M1253 633.7V642.5M1255 633.2V642.5M1257 639.7V642.5M1259 640.7V642.5M1261 639.3V642.5M1264 632.3V642.5M1266 627.9V642.5M1268 580.5V642.5M1270 634.6V642.5M1272 634.8V642.5M1275 636.6V642.5M1277 635.3V642.5M1279 638.9V642.5M1281 639.0V642.5M1283 636.0V642.5M1286 641.9V642.5M1288 638.0V642.5M1290 639.1V642.5M1292 635.8V642.5M1294 636.4V642.5M1296 641.5V642.5M1299 641.9V642.5" stroke="#c8c800" stroke-width="1" fill="none" transform="translate(0.5,0)"/><polyline points="58.4,329.3 60.2,325.2 64.9,325.2 74.4,323.9 80.5,319.8 89.3,319.1 93.3,317.4 104.2,315.7 113.6,315.1 120.4,313.7 122.4,311.7 131.2,311.0 136.7,310.0 144.8,309.0 150.2,304.9 154.3,303.9 165.8,302.2 170.5,299.9 178.6,298.5 185.4,298.1 205.7,297.9 226.0,296.8 228.8,296.4 297.8,296.1 300.5,295.4 310.0,295.1 310.0,295.4 420.4,295.4 421.7,294.3 501.6,294.3 503.0,293.4 570.0,293.4 570.0,293.3 581.9,293.3" fill="none" stroke="#f0f000" stroke-width="1" stroke-linejoin="round" shape-rendering="crispEdges" /><polyline points="584.2,275.3 591.7,273.2 597.1,264.4 602.5,261.7 606.6,254.3 610.6,253.6 620.1,252.9 624.2,251.3 628.2,247.5 632.3,246.4 664.8,246.4 689.2,247.5 714.9,248.2 735.2,249.9 763.6,251.3 792.1,252.2 830.0,254.0 830.0,254.1 846.2,254.5 857.1,256.4 870.6,256.8 888.2,258.2 918.0,258.4 927.5,260.5 938.3,260.9 951.9,261.6 954.6,263.3 965.4,264.3 979.0,264.7 989.8,268.3 996.6,268.7 1006.0,270.8 1022.3,271.7 1044.0,272.4 1076.5,273.1 1090.0,273.3 1090.0,273.5 1107.9,273.5" fill="none" stroke="#f0f000" stroke-width="1" stroke-linejoin="round" shape-rendering="crispEdges" /><polyline points="1110.0,284.7 1111.7,280.0 1115.7,269.2 1117.8,262.4 1120.5,260.4 1129.3,260.4 1132.0,259.0 1142.8,258.3 1146.9,254.9 1149.6,253.6 1152.3,250.5 1156.4,247.8 1159.1,247.1 1174.0,247.1 1176.7,246.4 1230.8,246.4 1232.2,247.5 1267.4,247.5 1268.8,248.2 1298.5,248.2" fill="none" stroke="#f0f000" stroke-width="1" stroke-linejoin="round" shape-rendering="crispEdges" /><polyline points="248.4,292.0 255.8,287.3 261.2,279.2 266.7,276.7 280.2,275.8 293.8,274.8 310.0,274.2 318.1,273.8 327.6,274.4 337.1,276.2 345.2,278.2 354.7,280.2 364.2,283.6 368.2,285.3 369.6,287.3 391.2,288.0 431.9,288.4 499.6,288.4 547.0,288.4 553.8,288.0 560.5,286.6 570.0,286.6 570.0,286.5 578.1,286.5 583.5,286.1 591.7,284.3 597.1,280.7 602.5,278.0 606.6,272.6 614.7,269.2 621.5,267.8 628.2,260.4 637.7,259.0 648.5,258.1 654.0,257.2 664.8,255.6 682.4,255.4 705.4,253.6 732.5,252.2 759.6,251.3 781.2,249.5 788.0,248.2 793.4,249.9 800.2,251.6 813.8,252.9 817.8,255.6 821.9,259.7 827.3,261.7 830.0,261.7 832.7,262.2 838.1,262.9 844.9,265.2 851.7,265.6 857.1,269.3 869.3,271.0 874.7,273.3 886.9,274.7 897.7,277.1 908.5,277.1 918.0,278.5 924.8,280.5 935.6,283.2 949.2,285.3 954.6,288.0 965.4,290.0 976.2,291.6 983.0,294.1 987.8,298.8 992.5,301.1 999.3,301.8 1006.0,303.5 1012.8,304.9 1019.6,306.2 1039.9,307.3 1067.0,307.3 1080.5,306.2 1090.0,306.2 1090.0,306.4 1096.8,305.1 1102.2,304.6 1109.0,304.4 1114.4,302.3 1118.4,297.6 1125.2,295.6 1130.6,293.5 1136.0,289.2 1144.2,286.8 1146.9,281.4 1152.3,273.2 1157.7,268.5 1165.8,265.8 1174.0,263.8 1182.1,259.0 1190.2,257.0 1195.6,255.4 1201.0,254.7 1209.2,254.0 1225.4,252.6 1239.0,251.3 1252.5,250.2 1266.0,249.1 1279.6,248.6 1298.5,247.9" fill="none" stroke="#f0f000" stroke-width="1" stroke-linejoin="round" shape-rendering="crispEdges" stroke-dasharray="3 3"/><polyline points="58.4,336.7 59.5,321.1 60.8,316.4 65.6,323.2 69.6,322.8 74.4,310.3 77.1,298.1 80.5,290.7 82.5,295.4 84.5,290.4 86.6,292.0 89.9,298.1 94.0,286.6 98.1,286.6 100.8,298.1 102.1,290.0 104.2,293.4 107.6,292.7 112.3,289.3 115.7,292.0 117.7,289.7 120.7,289.3 122.4,279.2 124.2,283.9 126.5,282.6 131.2,287.6 138.0,279.2 139.4,279.2 141.4,282.6 144.8,279.2 146.4,279.2 148.2,267.7 150.9,264.5 153.6,264.5 157.7,270.4 159.4,267.7 161.0,267.2 163.8,264.3 165.8,265.2 168.5,264.9 170.5,259.9 172.6,259.5 173.9,260.5 177.3,259.5 179.7,275.1 181.4,278.1 183.4,271.0 185.4,268.3 188.1,271.0 190.8,270.4 194.9,273.5 198.3,271.4 207.1,271.4 209.1,279.2 211.1,281.9 214.5,284.3 217.2,284.6 220.9,286.6 223.3,286.2 225.4,282.6 228.1,281.9 229.8,276.5 231.5,283.9 236.2,284.6 238.9,287.0 242.3,286.6 245.0,284.6 247.7,283.9 249.1,281.6 251.8,281.2 255.8,283.2 258.5,281.9 261.2,285.3 264.6,287.3 267.3,287.3 271.4,282.6 274.8,282.1 277.5,281.2 282.9,285.9 286.3,284.3 289.7,284.6 293.1,286.6 295.8,284.6 298.5,286.6 301.9,284.6 304.6,284.6 308.0,288.6 310.0,287.6 314.1,288.6 318.1,291.6 320.8,292.3 324.9,289.7 330.3,289.3 334.4,292.3 337.1,292.3 339.5,290.7 341.8,292.0 345.2,292.7 349.9,295.0 353.3,293.4 356.7,295.0 359.4,294.7 361.5,293.4 364.2,296.1 367.6,300.2 370.3,296.8 373.6,295.4 374.7,298.1 376.4,292.7 377.7,295.1 383.8,294.7 385.8,292.0 389.2,292.0 391.2,287.3 394.6,291.6 398.0,292.7 401.0,295.4 404.5,300.2 406.8,289.3 407.8,288.0 408.9,289.3 411.6,284.6 413.6,286.6 418.3,286.2 420.4,285.9 422.1,282.6 424.8,287.3 429.2,284.6 432.6,281.2 434.6,281.2 438.0,284.3 442.0,284.6 444.1,285.3 446.1,287.0 448.1,289.3 452.2,289.3 454.9,286.6 459.0,286.2 462.3,285.9 464.4,284.3 467.1,285.9 470.5,289.7 475.2,282.6 479.3,286.2 484.0,287.3 486.0,285.9 488.8,281.6 490.8,281.2 492.8,284.3 496.9,285.3 499.3,282.6 500.9,285.9 503.6,287.6 507.7,292.3 510.4,292.0 513.1,289.3 515.8,287.6 518.5,290.0 523.3,290.0 528.0,292.4 532.1,290.7 534.8,290.7 538.9,292.7 549.7,292.7 551.7,290.0 555.1,289.3 557.1,287.6 559.2,288.6 560.5,286.6 564.6,288.6 567.3,287.3 570.0,286.8 574.1,289.8 579.5,290.6 581.9,288.8" fill="none" stroke="#ffffff" stroke-width="1" stroke-linejoin="round" shape-rendering="crispEdges" /><polyline points="584.2,273.5 586.9,276.6 590.3,269.8 593.0,263.1 597.1,256.3 601.8,254.3 604.5,244.1 606.6,240.3 608.6,241.4 610.6,257.7 613.3,256.3 615.4,248.2 619.4,242.8 622.1,239.4 624.2,236.0 626.2,235.3 628.5,226.5 631.6,232.6 633.6,239.4 635.7,248.6 637.0,238.0 639.1,236.9 641.8,241.4 643.8,246.8 646.5,248.4 649.2,245.5 654.6,245.5 656.7,250.2 659.4,252.9 661.8,265.8 663.4,261.7 665.7,248.4 670.2,260.4 676.3,249.5 678.7,260.4 681.0,254.3 682.4,257.0 685.1,257.2 692.6,265.8 695.9,259.4 703.4,260.4 707.4,257.7 709.5,260.4 711.5,261.0 714.2,264.4 716.2,261.0 719.6,260.4 722.3,264.0 724.4,259.7 727.1,259.0 729.5,261.7 731.1,261.0 735.5,275.5 742.7,262.4 746.0,264.4 750.1,265.4 753.5,262.4 755.8,268.1 757.6,265.1 760.7,267.4 763.6,265.1 765.7,264.4 768.8,261.0 771.1,265.4 773.8,263.8 777.2,259.0 779.6,257.7 784.0,266.5 786.7,264.7 790.1,271.2 792.4,284.3 794.8,278.0 798.9,274.6 802.2,268.2 804.3,269.2 807.2,275.3 809.7,270.5 811.7,274.3 813.8,278.0 817.1,274.6 819.8,270.2 821.9,273.9 823.9,280.0 825.9,281.4 830.0,282.6 833.4,284.3 836.1,282.1 840.8,285.9 844.9,286.6 849.0,292.0 851.7,293.4 854.4,289.3 858.4,297.9 860.5,295.4 865.9,295.1 871.3,286.6 873.3,292.0 877.4,292.3 881.5,293.7 885.5,292.3 886.9,293.4 890.3,292.3 895.7,292.3 898.4,287.3 906.5,287.3 909.2,290.7 911.2,287.6 914.0,290.0 918.0,290.9 922.1,294.1 924.1,295.0 926.1,303.5 928.2,303.5 930.2,300.4 934.3,300.4 938.3,302.2 941.7,304.2 946.5,304.2 949.8,303.3 952.6,311.0 954.6,312.6 957.3,308.3 962.7,308.3 964.1,309.6 967.4,310.3 969.5,311.7 971.5,309.6 973.5,311.0 975.6,309.6 979.0,309.6 981.0,311.0 983.0,311.7 985.7,329.9 987.8,330.4 990.5,327.9 992.5,331.3 996.6,325.9 1000.6,324.5 1006.0,321.8 1007.4,320.5 1009.4,313.0 1012.1,314.4 1014.2,309.6 1016.2,311.7 1018.9,308.3 1023.6,304.2 1025.7,306.2 1030.4,303.5 1033.1,306.2 1035.8,301.5 1038.5,311.7 1041.2,302.9 1044.0,300.8 1047.3,295.4 1050.1,300.8 1053.4,306.9 1057.5,298.8 1060.2,290.7 1062.9,293.4 1067.0,292.3 1069.7,292.0 1072.4,289.3 1075.1,292.0 1077.5,281.6 1079.8,288.0 1082.6,292.3 1084.6,288.0 1086.6,289.3 1090.0,289.3 1090.0,289.5 1095.4,289.5 1099.5,284.3 1102.2,286.1 1106.2,286.1 1107.9,284.7" fill="none" stroke="#ffffff" stroke-width="1" stroke-linejoin="round" shape-rendering="crispEdges" /><polyline points="1110.0,275.9 1112.3,267.1 1115.7,261.0 1117.5,246.4 1120.5,253.6 1123.2,268.5 1125.9,263.1 1128.6,270.5 1130.6,257.0 1132.7,251.3 1136.0,258.3 1138.8,259.7 1141.5,267.5 1144.8,246.1 1147.6,243.4 1150.3,243.4 1153.0,233.3 1155.7,232.2 1159.1,239.4 1163.1,242.1 1165.2,244.8 1167.2,240.5 1171.2,244.5 1174.0,245.1 1176.0,238.7 1179.4,236.7 1182.8,234.6 1189.5,235.6 1193.6,245.1 1196.3,245.9 1198.3,243.4 1200.4,245.5 1201.7,251.3 1205.1,253.6 1209.2,259.0 1213.2,259.7 1215.3,256.3 1218.0,256.7 1220.7,252.9 1222.0,255.6 1224.5,254.3 1226.8,260.0 1232.2,259.4 1235.6,262.4 1237.6,261.0 1243.7,263.8 1246.4,252.6 1250.5,260.4 1255.2,252.2 1259.3,260.4 1264.7,252.2 1268.8,267.1 1270.1,265.8 1272.1,268.2 1277.6,267.1 1279.6,262.4 1280.9,264.4 1284.3,260.4 1286.4,261.0 1290.4,268.2 1293.1,268.2 1298.5,263.1" fill="none" stroke="#ffffff" stroke-width="1" stroke-linejoin="round" shape-rendering="crispEdges" /><path d="M58 927.3V927.5M60 926.5V927.4M62 925.5V927.3M64 924.6V927.2M66 923.6V927.1M69 921.6V927.0M71 920.1V926.9M73 918.6V926.8M75 917.1V926.7M77 915.6V926.6M80 913.3V926.5M82 911.5V926.4M84 909.7V926.3M86 907.9V926.2M88 906.1V926.1M91 903.4V926.0M93 901.6V925.9M95 899.8V925.8M97 898.2V925.7M99 897.4V925.6M102 896.3V925.5M104 895.6V925.4M106 894.8V925.3M108 894.1V925.2M110 893.3V925.1M112 892.6V925.0M115 891.5V924.9M117 890.8V924.8M119 890.1V924.7M121 889.4V924.6M123 888.7V924.5M126 887.6V924.4M128 886.9V924.3M130 886.2V924.2M132 885.5V924.1M134 884.5V924.0M137 882.4V923.9M139 881.0V923.8M141 879.6V923.7M143 878.2V923.6M145 876.8V923.5M148 874.7V923.4M150 873.3V923.2M152 872.1V923.1M154 870.9V923.0M156 869.7V922.9M159 867.9V922.7M161 866.7V922.6M163 865.5V922.5M165 864.3V922.4M167 863.1V922.3M169 862.1V922.2M172 860.6V922.0M174 859.6V921.9M176 858.6V921.8M178 858.1V921.7M180 857.8V921.6M183 857.3V921.4M185 857.0V921.3M187 856.7V921.2M189 856.6V921.1M191 856.5V921.0M194 856.4V920.8M196 856.4V920.7M198 856.3V920.6M200 856.2V920.5M202 856.2V920.4M205 856.1V920.2M207 856.1V920.1M209 856.7V920.0M211 857.3V919.9M213 857.9V919.8M215 858.5V919.7M218 859.4V919.5M220 860.0V919.4M222 860.5V919.3M224 861.0V919.2M226 861.5V919.1M229 862.2V918.9M231 862.7V918.8M233 863.2V918.7M235 863.6V918.6M237 863.9V918.5M240 864.4V918.4M242 864.8V918.3M244 865.1V918.2M246 865.5V918.1M248 865.8V918.0M251 866.3V917.9M253 866.6V917.8M255 866.8V917.7M257 867.0V917.6M259 867.2V917.5M262 867.5V917.4M264 867.6V917.3M266 867.8V917.2M268 868.0V917.1M270 868.1V917.0M272 868.3V916.9M275 868.6V916.8M277 868.8V916.7M279 868.9V916.6M281 869.1V916.5M283 869.3V916.4M286 869.7V916.3M288 870.0V916.2M290 870.3V916.1M292 870.6V916.0M294 870.9V915.9M297 871.4V915.8M299 871.7V915.7M301 872.0V915.6M303 872.3V915.5M305 872.6V915.4M308 873.0V915.3M310 873.3V915.2M312 873.4V915.1M314 873.6V915.0M316 873.7V914.9M319 874.0V914.8M321 874.1V914.7M323 874.2V914.6M325 874.4V914.5M327 874.5V914.4M329 874.7V914.4M332 874.9V914.2M334 875.1V914.1M336 875.3V914.1M338 875.5V914.0M340 875.7V913.9M343 876.0V913.8M345 876.2V913.7M347 876.4V913.6M349 876.6V913.5M351 876.7V913.4M354 877.0V913.3M356 877.2V913.2M358 877.4V913.1M360 877.6V913.0M362 877.8V913.0M365 878.1V912.8M367 878.3V912.7M369 878.2V912.7M371 878.2V912.6M373 878.1V912.5M375 878.1V912.4M378 878.0V912.3M380 877.9V912.2M382 877.8V912.1M384 877.8V912.0M386 877.7V911.9M389 877.6V911.8M391 877.6V911.7M393 877.5V911.6M395 877.5V911.6M397 877.4V911.5M400 877.3V911.4M402 877.2V911.3M404 877.1V911.2M406 877.0V911.1M408 876.9V911.0M411 876.8V910.9M413 876.7V910.8M415 876.6V910.7M417 876.5V910.7M419 876.4V910.6M422 876.2V910.5M424 876.1V910.4M426 876.1V910.3M428 876.0V910.2M430 875.9V910.1M432 875.8V910.1M435 875.6V909.9M437 875.5V909.9M439 875.5V909.8M441 875.4V909.7M443 875.3V909.6M446 875.2V909.5M448 875.1V909.4M450 875.0V909.3M452 874.9V909.3M454 874.8V909.2M457 874.7V909.1M459 874.6V909.0M461 874.5V908.9M463 874.5V908.8M465 874.4V908.7M468 874.3V908.6M470 874.2V908.5M472 874.1V908.5M474 874.1V908.4M476 874.0V908.3M478 874.0V908.2M481 873.9V908.1M483 873.8V908.1M485 873.8V908.0M487 873.7V907.9M489 873.6V907.8M492 873.5V907.7M494 873.5V907.7M496 873.4V907.6M498 873.4V907.5M500 873.3V907.4M503 873.5V907.3M505 873.7V907.3M507 873.9V907.2M509 874.0V907.1M511 874.2V907.1M514 874.4V907.0M516 874.6V906.9M518 874.8V906.8M520 874.9V906.7M522 875.1V906.7M525 875.3V906.6M527 875.5V906.5M529 875.7V906.4M531 875.8V906.4M533 876.0V906.3M535 876.0V906.2M538 876.0V906.1M540 875.9V906.0M542 875.9V906.0M544 875.9V905.9M546 875.9V905.8M549 875.9V905.7M551 875.8V905.6M553 875.8V905.6M555 875.8V905.5M557 875.8V905.4M560 875.8V905.3M562 875.7V905.3M564 875.7V905.2M566 875.7V905.0M568 875.5V904.9M571 874.9V904.7M573 874.6V904.6M575 874.2V904.5M577 873.8V904.4M579 873.5V904.2M582 873.3V904.0M584 872.8V903.9M586 871.5V903.8M588 870.2V903.7M590 868.9V903.5M592 867.6V903.4M595 865.2V903.2M597 863.4V903.1M599 861.6V903.0M601 859.8V902.8M603 858.0V902.7M606 855.3V902.5M608 853.5V902.4M610 851.7V902.3M612 850.3V902.2M614 848.9V902.0M617 846.8V901.8M619 845.4V901.7M621 844.0V901.6M623 842.6V901.5M625 841.2V901.3M628 839.4V901.1M630 838.4V901.0M632 837.4V900.9M634 836.4V900.8M636 835.4V900.6M638 834.4V900.5M641 832.9V900.3M643 831.9V900.2M645 831.6V900.1M647 831.4V900.0M649 831.3V899.8M652 831.1V899.6M654 831.1V899.5M656 831.5V899.4M658 831.8V899.3M660 832.1V899.2M663 832.7V899.1M665 833.0V899.0M667 833.3V898.9M669 833.7V898.8M671 834.0V898.7M674 834.5V898.5M676 834.9V898.4M678 835.2V898.3M680 835.5V898.2M682 835.8V898.1M685 836.2V898.0M687 836.5V897.9M689 836.8V897.8M691 837.1V897.7M693 837.4V897.6M695 837.7V897.5M698 838.2V897.3M700 838.5V897.2M702 838.8V897.1M704 839.1V897.0M706 839.4V896.9M709 839.8V896.8M711 840.1V896.7M713 840.4V896.6M715 840.6V896.5M717 840.8V896.4M720 841.2V896.2M722 841.4V896.1M724 841.7V896.0M726 841.9V895.9M728 842.2V895.8M731 842.5V895.7M733 842.8V895.6M735 843.0V895.5M737 843.2V895.4M739 843.5V895.3M741 843.7V895.2M744 844.1V895.0M746 844.2V894.9M748 844.4V894.8M750 844.5V894.7M752 844.7V894.6M755 844.9V894.5M757 845.1V894.4M759 845.3V894.3M761 845.4V894.2M763 845.6V894.1M766 845.8V894.0M768 846.0V893.9M770 846.2V893.8M772 846.3V893.7M774 846.5V893.6M777 846.7V893.4M779 847.1V893.3M781 847.4V893.2M783 847.7V893.1M785 848.0V893.0M788 848.5V892.9M790 848.8V892.8M792 849.1V892.7M794 849.4V892.6M796 849.8V892.5M798 850.1V892.4M801 850.6V892.2M803 851.0V892.1M805 851.3V892.1M807 851.6V892.0M809 852.0V892.0M812 852.5V891.9M814 852.8V891.8M816 853.2V891.8M818 853.5V891.7M820 853.9V891.7M823 854.4V891.6M825 854.7V891.5M827 855.1V891.5M829 855.7V891.4M831 856.2V891.4M834 857.1V891.3M836 857.7V891.2M838 858.2V891.2M840 858.8V891.1M842 859.4V891.1M845 860.3V891.0M847 860.8V890.9M849 861.4V890.9M851 862.1V890.8M853 862.8V890.8M855 863.6V890.7M858 864.7V890.6M860 865.4V890.6M862 866.2V890.5M864 866.9V890.5M866 867.7V890.4M869 868.8V890.3M871 869.6V890.3M873 870.3V890.3M875 871.1V890.3M877 871.8V890.3M880 872.3V890.3M882 872.6V890.3M884 872.9V890.2M886 873.3V890.2M888 873.6V890.2M891 874.1V890.2M893 874.4V890.2M895 874.8V890.2M897 875.1V890.2M899 875.5V890.2M901 875.8V890.2M904 876.3V890.2M906 876.6V890.2M908 877.0V890.2M910 877.3V890.2M912 877.7V890.2M915 878.3V890.2M917 878.7V890.2M919 879.1V890.2M921 879.5V890.2M923 879.9V890.2M926 880.6V890.2M928 881.0V890.2M930 881.6V890.2M932 882.1V890.2M934 882.6V890.2M937 883.4V890.2M939 883.9V890.2M941 884.4V890.2M943 884.9V890.2M945 885.3V890.2M948 885.9V890.2M950 886.3V890.2M952 886.7V890.2M954 887.1V890.2M956 887.5V890.2M958 887.9V890.2M961 888.5V890.2M963 888.8V890.2M965 889.2V890.2M967 889.6V890.2M969 889.9V890.2M1068 890.1V890.2M1070 889.7V890.2M1072 889.3V890.2M1075 888.6V890.2M1077 888.0V890.2M1079 886.3V890.1M1081 885.1V890.1M1083 884.5V890.1M1086 883.6V890.0M1088 883.0V890.0M1090 882.4V889.9M1092 881.8V889.9M1094 881.2V889.9M1097 880.2V889.8M1099 879.4V889.8M1101 878.6V889.7M1103 877.8V889.7M1105 877.0V889.7M1108 875.8V889.6M1110 875.0V889.6M1112 874.2V889.6M1114 872.9V889.5M1116 871.5V889.4M1118 870.1V889.3M1121 868.0V889.2M1123 866.6V889.1M1125 865.2V889.0M1127 863.8V888.9M1129 862.4V888.8M1132 860.3V888.6M1134 858.9V888.5M1136 857.5V888.4M1138 856.1V888.3M1140 854.7V888.2M1143 852.6V888.1M1145 851.2V888.0M1147 849.8V887.9M1149 848.4V887.8M1151 847.0V887.7M1154 844.9V887.5M1156 843.5V887.4M1158 842.1V887.3M1160 840.7V887.2M1162 839.6V887.1M1164 838.6V887.0M1167 837.1V886.9M1169 836.1V886.8M1171 835.1V886.7M1173 834.1V886.6M1175 833.1V886.5M1178 831.7V886.4M1180 830.9V886.3M1182 830.2V886.2M1184 829.5V886.1M1186 828.7V886.0M1189 827.6V885.8M1191 827.3V885.7M1193 827.3V885.6M1195 827.3V885.5M1197 827.3V885.4M1200 827.4V885.3M1202 828.0V885.2M1204 828.6V885.1M1206 829.2V885.0M1208 829.8V884.9M1211 830.7V884.8M1213 831.3V884.7M1215 831.9V884.6M1217 832.4V884.5M1219 832.7V884.4M1221 833.1V884.2M1224 833.7V884.1M1226 834.1V884.0M1228 834.5V883.9M1230 834.8V883.8M1232 835.2V883.7M1235 835.8V883.5M1237 836.2V883.5M1239 836.5V883.4M1241 836.9V883.2M1243 837.2V883.1M1246 837.6V883.0M1248 837.8V882.9M1250 838.1V882.8M1252 838.3V882.7M1254 838.6V882.7M1257 838.9V882.5M1259 839.2V882.5M1261 839.4V882.4M1263 839.7V882.3M1265 839.9V882.2M1267 840.2V882.1M1270 840.6V882.0M1272 841.0V881.9M1274 841.3V881.8M1276 841.6V881.7M1278 842.0V881.7M1281 842.5V881.5M1283 842.8V881.4M1285 843.1V881.4M1287 843.4V881.3M1289 843.6V881.2M1292 843.8V881.1M1294 844.0V881.0M1296 844.2V880.9M1298 844.3V880.8" stroke="#ff0000" stroke-width="1" fill="none" transform="translate(0.5,0)" shape-rendering="crispEdges"/><path d="M972 890.5V890.2M974 891.0V890.2M976 891.9V890.2M978 892.8V890.2M980 893.7V890.2M983 895.1V890.2M985 896.0V890.2M987 896.9V890.2M989 897.8V890.2M991 898.6V890.2M994 899.7V890.2M996 900.3V890.2M998 901.0V890.2M1000 901.7V890.2M1002 902.4V890.2M1004 903.1V890.2M1007 903.9V890.2M1009 903.6V890.2M1011 903.3V890.2M1013 902.9V890.2M1015 902.6V890.2M1018 902.0V890.2M1020 901.7V890.2M1022 901.2V890.2M1024 900.6V890.2M1026 900.1V890.2M1029 899.3V890.2M1031 898.8V890.2M1033 898.3V890.2M1035 897.7V890.2M1037 897.2V890.2M1040 896.6V890.2M1042 896.2V890.2M1044 895.8V890.2M1046 895.5V890.2M1048 895.1V890.2M1051 894.5V890.2M1053 894.1V890.2M1055 893.4V890.2M1057 892.7V890.2M1059 892.0V890.2M1061 891.5V890.2M1064 890.9V890.2M1066 890.5V890.2" stroke="#22e022" stroke-width="1" fill="none" transform="translate(0.5,0)" shape-rendering="crispEdges"/><rect x="58" y="812" width="1240" height="1" fill="#00d200" /><rect x="58" y="875" width="1240" height="1" fill="#00d200" /><rect x="99" y="813" width="1" height="62" fill="#f0f000"/><rect x="104" y="813" width="1" height="62" fill="#f0f000"/><rect x="112" y="813" width="1" height="62" fill="#f0f000"/><rect x="314" y="813" width="1" height="62" fill="#f0f000"/><rect x="332" y="813" width="1" height="62" fill="#f0f000"/><rect x="393" y="813" width="1" height="62" fill="#f0f000"/><rect x="507" y="813" width="1" height="62" fill="#f0f000"/><rect x="518" y="813" width="1" height="62" fill="#f0f000"/><rect x="522" y="813" width="1" height="62" fill="#f0f000"/><rect x="575" y="813" width="1" height="62" fill="#f0f000"/><rect x="849" y="813" width="1" height="62" fill="#f0f000"/><rect x="855" y="813" width="1" height="62" fill="#f0f000"/><rect x="873" y="813" width="1" height="62" fill="#f0f000"/><rect x="908" y="813" width="1" height="62" fill="#f0f000"/><rect x="915" y="813" width="1" height="62" fill="#f0f000"/><rect x="1075" y="813" width="1" height="62" fill="#f0f000"/><rect x="1081" y="813" width="1" height="62" fill="#f0f000"/><polyline points="58,927.5 143.5,923.6 231,918.8 318.5,914.8 406,911.1 476,908.3 563.5,905.2 651,899.7 738.5,895.3 804,892.1 870,890.3 896,890.2 1075,890.2 1115,889.5 1158.5,887.3 1202,885.2 1246,883 1298.5,880.8" fill="none" stroke="#ffffff" stroke-width="1.4" stroke-linejoin="round" shape-rendering="crispEdges" /><polyline points="58.4,927.0 59.5,909.8 60.8,904.7 65.6,912.1 69.6,911.7 74.4,897.9 77.1,884.5 80.5,876.3 82.5,881.5 84.5,876.0 86.6,877.8 89.9,884.5 94.0,871.8 98.1,871.8 100.8,884.5 102.1,875.6 104.2,879.3 107.6,878.5 112.3,874.8 115.7,877.8 117.7,875.2 120.7,874.8 122.4,863.7 124.2,868.8 126.5,867.4 131.2,872.9 138.0,863.7 139.4,863.7 141.4,867.4 144.8,863.7 146.4,863.7 148.2,851.0 150.9,847.5 153.6,847.5 157.7,854.0 159.4,851.0 161.0,850.4 163.8,847.2 165.8,848.2 168.5,847.9 170.5,842.4 172.6,842.0 173.9,843.1 177.3,842.0 179.7,859.1 181.4,862.4 183.4,854.6 185.4,851.6 188.1,854.6 190.8,854.0 194.9,857.4 198.3,855.1 207.1,855.1 209.1,863.7 211.1,866.6 214.5,869.3 217.2,869.6 220.9,871.8 223.3,871.4 225.4,867.4 228.1,866.6 229.8,860.7 231.5,868.8 236.2,869.6 238.9,872.3 242.3,871.8 245.0,869.6 247.7,868.8 249.1,866.3 251.8,865.9 255.8,868.1 258.5,866.6 261.2,870.4 264.6,872.6 267.3,872.6 271.4,867.4 274.8,866.9 277.5,865.9 282.9,871.0 286.3,869.3 289.7,869.6 293.1,871.8 295.8,869.6 298.5,871.8 301.9,869.6 304.6,869.6 308.0,874.0 310.0,872.9 314.1,874.0 318.1,877.3 320.8,878.1 324.9,875.2 330.3,874.8 334.4,878.1 337.1,878.1 339.5,876.3 341.8,877.8 345.2,878.5 349.9,881.1 353.3,879.3 356.7,881.1 359.4,880.7 361.5,879.3 364.2,882.3 367.6,886.8 370.3,883.1 373.6,881.5 374.7,884.5 376.4,878.5 377.7,881.2 383.8,880.7 385.8,877.8 389.2,877.8 391.2,872.6 394.6,877.3 398.0,878.5 401.0,881.5 404.5,886.8 406.8,874.8 407.8,873.4 408.9,874.8 411.6,869.6 413.6,871.8 418.3,871.4 420.4,871.0 422.1,867.4 424.8,872.6 429.2,869.6 432.6,865.9 434.6,865.9 438.0,869.3 442.0,869.6 444.1,870.4 446.1,872.3 448.1,874.8 452.2,874.8 454.9,871.8 459.0,871.4 462.3,871.0 464.4,869.3 467.1,871.0 470.5,875.2 475.2,867.4 479.3,871.4 484.0,872.6 486.0,871.0 488.8,866.3 490.8,865.9 492.8,869.3 496.9,870.4 499.3,867.4 500.9,871.0 503.6,872.9 507.7,878.1 510.4,877.8 513.1,874.8 515.8,872.9 518.5,875.6 523.3,875.6 528.0,878.2 532.1,876.3 534.8,876.3 538.9,878.5 549.7,878.5 551.7,875.6 555.1,874.8 557.1,872.9 559.2,874.0 560.5,871.8 564.6,874.0 567.3,872.6 570.0,872.0 574.1,875.3 579.5,876.2 581.9,874.2 584.2,857.4 586.9,860.8 590.3,853.3 593.0,845.9 597.1,838.4 601.8,836.2 604.5,825.0 606.6,820.8 608.6,822.0 610.6,840.0 613.3,838.4 615.4,829.5 619.4,823.5 622.1,819.8 624.2,816.1 626.2,815.3 628.5,805.6 631.6,812.3 633.6,819.8 635.7,829.9 637.0,818.3 639.1,817.0 641.8,822.0 643.8,828.0 646.5,829.7 649.2,826.5 654.6,826.5 656.7,831.7 659.4,834.7 661.8,848.9 663.4,844.4 665.7,829.7 670.2,842.9 676.3,830.9 678.7,842.9 681.0,836.2 682.4,839.2 685.1,839.4 692.6,848.9 695.9,841.8 703.4,842.9 707.4,840.0 709.5,842.9 711.5,843.6 714.2,847.3 716.2,843.6 719.6,842.9 722.3,846.9 724.4,842.2 727.1,841.4 729.5,844.4 731.1,843.6 735.5,859.6 742.7,845.1 746.0,847.3 750.1,848.5 753.5,845.1 755.8,851.4 757.6,848.1 760.7,850.7 763.6,848.1 765.7,847.3 768.8,843.6 771.1,848.5 773.8,846.7 777.2,841.4 779.6,840.0 784.0,849.7 786.7,847.7 790.1,854.8 792.4,869.3 794.8,862.3 798.9,858.6 802.2,851.5 804.3,852.6 807.2,859.4 809.7,854.1 811.7,858.3 813.8,862.3 817.1,858.6 819.8,853.7 821.9,857.8 823.9,864.5 825.9,866.1 830.0,867.4 833.4,869.3 836.1,866.9 840.8,871.0 844.9,871.8 849.0,877.8 851.7,879.3 854.4,874.8 858.4,884.3 860.5,881.5 865.9,881.2 871.3,871.8 873.3,877.8 877.4,878.1 881.5,879.6 885.5,878.1 886.9,879.3 890.3,878.1 895.7,878.1 898.4,872.6 906.5,872.6 909.2,876.3 911.2,872.9 914.0,875.6 918.0,876.6 922.1,880.1 924.1,881.1 926.1,890.4 928.2,890.4 930.2,887.0 934.3,887.0 938.3,889.0 941.7,891.2 946.5,891.2 949.8,890.2 952.6,898.7 954.6,900.5 957.3,895.7 962.7,895.7 964.1,897.2 967.4,897.9 969.5,899.5 971.5,897.2 973.5,898.7 975.6,897.2 979.0,897.2 981.0,898.7 983.0,899.5 985.7,919.5 987.8,920.1 990.5,917.3 992.5,921.1 996.6,915.1 1000.6,913.6 1006.0,910.6 1007.4,909.2 1009.4,900.9 1012.1,902.4 1014.2,897.2 1016.2,899.5 1018.9,895.7 1023.6,891.2 1025.7,893.4 1030.4,890.4 1033.1,893.4 1035.8,888.2 1038.5,899.5 1041.2,889.8 1044.0,887.5 1047.3,881.5 1050.1,887.5 1053.4,894.2 1057.5,885.3 1060.2,876.3 1062.9,879.3 1067.0,878.1 1069.7,877.8 1072.4,874.8 1075.1,877.8 1077.5,866.3 1079.8,873.4 1082.6,878.1 1084.6,873.4 1086.6,874.8 1090.0,874.8 1090.0,875.0 1095.4,875.0 1099.5,869.3 1102.2,871.3 1106.2,871.3 1107.9,869.7 1110.0,860.0 1112.3,850.3 1115.7,843.6 1117.5,827.5 1120.5,835.4 1123.2,851.9 1125.9,845.9 1128.6,854.1 1130.6,839.2 1132.7,832.9 1136.0,840.6 1138.8,842.2 1141.5,850.8 1144.8,827.2 1147.6,824.2 1150.3,824.2 1153.0,813.1 1155.7,811.9 1159.1,819.8 1163.1,822.8 1165.2,825.8 1167.2,821.0 1171.2,825.4 1174.0,826.1 1176.0,819.0 1179.4,816.8 1182.8,814.5 1189.5,815.6 1193.6,826.1 1196.3,827.0 1198.3,824.2 1200.4,826.5 1201.7,832.9 1205.1,835.4 1209.2,841.4 1213.2,842.2 1215.3,838.4 1218.0,838.9 1220.7,834.7 1222.0,837.7 1224.5,836.2 1226.8,842.5 1232.2,841.8 1235.6,845.1 1237.6,843.6 1243.7,846.7 1246.4,834.3 1250.5,842.9 1255.2,833.9 1259.3,842.9 1264.7,833.9 1268.8,850.3 1270.1,848.9 1272.1,851.5 1277.6,850.3 1279.6,845.1 1280.9,847.3 1284.3,842.9 1286.4,843.6 1290.4,851.5 1293.1,851.5 1298.5,845.9" fill="none" stroke="#ffffff" stroke-width="1" stroke-linejoin="round" shape-rendering="crispEdges" /></svg>
<div class="t " style="left:58px;top:54px;color:#e6e6e6;font-size:12px;">广州酒家</div>
<div class="t " style="left:116px;top:54px;color:#e6e6e6;font-size:12px;">最近3日分时</div>
<div class="t " style="left:187px;top:54px;color:#e6e6e6;font-size:12px;">框架</div>
<div class="t " style="left:215px;top:54px;color:#d2d200;font-size:12px;">成交量</div>
<div class="t " style="left:8px;top:66px;color:#ff3c3c;font-size:12.3px;width:44px;text-align:right;">23.11</div>
<div class="t " style="left:8px;top:96px;color:#ff3c3c;font-size:12.3px;width:44px;text-align:right;">22.92</div>
<div class="t " style="left:8px;top:127px;color:#ff3c3c;font-size:12.3px;width:44px;text-align:right;">22.72</div>
<div class="t " style="left:8px;top:157px;color:#ff3c3c;font-size:12.3px;width:44px;text-align:right;">22.53</div>
<div class="t " style="left:8px;top:188px;color:#ff3c3c;font-size:12.3px;width:44px;text-align:right;">22.33</div>
<div class="t " style="left:8px;top:218px;color:#ff3c3c;font-size:12.3px;width:44px;text-align:right;">22.14</div>
<div class="t " style="left:8px;top:249px;color:#ff3c3c;font-size:12.3px;width:44px;text-align:right;">21.94</div>
<div class="t " style="left:8px;top:280px;color:#e6e6e6;font-size:12.3px;width:44px;text-align:right;">21.75</div>
<div class="t " style="left:8px;top:310px;color:#00e600;font-size:12.3px;width:44px;text-align:right;">21.56</div>
<div class="t " style="left:8px;top:341px;color:#00e600;font-size:12.3px;width:44px;text-align:right;">21.36</div>
<div class="t " style="left:8px;top:372px;color:#00e600;font-size:12.3px;width:44px;text-align:right;">21.17</div>
<div class="t " style="left:8px;top:402px;color:#00e600;font-size:12.3px;width:44px;text-align:right;">20.97</div>
<div class="t " style="left:8px;top:433px;color:#00e600;font-size:12.3px;width:44px;text-align:right;">20.78</div>
<div class="t " style="left:8px;top:464px;color:#00e600;font-size:12.3px;width:44px;text-align:right;">20.58</div>
<div class="t " style="left:1637px;top:65px;color:#ff3c3c;font-size:12px;">6.26%</div>
<div class="t " style="left:1637px;top:95px;color:#ff3c3c;font-size:12px;">5.37%</div>
<div class="t " style="left:1637px;top:126px;color:#ff3c3c;font-size:12px;">4.47%</div>
<div class="t " style="left:1637px;top:156px;color:#ff3c3c;font-size:12px;">3.58%</div>
<div class="t " style="left:1637px;top:187px;color:#ff3c3c;font-size:12px;">2.68%</div>
<div class="t " style="left:1637px;top:217px;color:#ff3c3c;font-size:12px;">1.79%</div>
<div class="t " style="left:1637px;top:248px;color:#ff3c3c;font-size:12px;">0.89%</div>
<div class="t " style="left:1637px;top:279px;color:#e6e6e6;font-size:12px;">0.00%</div>
<div class="t " style="left:1637px;top:309px;color:#00e600;font-size:12px;">0.89%</div>
<div class="t " style="left:1637px;top:340px;color:#00e600;font-size:12px;">1.79%</div>
<div class="t " style="left:1637px;top:371px;color:#00e600;font-size:12px;">2.68%</div>
<div class="t " style="left:1637px;top:401px;color:#00e600;font-size:12px;">3.58%</div>
<div class="t " style="left:1637px;top:432px;color:#00e600;font-size:12px;">4.47%</div>
<div class="t " style="left:1637px;top:463px;color:#00e600;font-size:12px;">5.37%</div>
<div class="t " style="left:1637px;top:494px;color:#d2d200;font-size:12px;">1606</div>
<div class="t " style="left:1637px;top:518px;color:#d2d200;font-size:12px;">1338</div>
<div class="t " style="left:1637px;top:542px;color:#d2d200;font-size:12px;">1071</div>
<div class="t " style="left:1637px;top:566px;color:#d2d200;font-size:12px;">803</div>
<div class="t " style="left:1637px;top:590px;color:#d2d200;font-size:12px;">535</div>
<div class="t " style="left:1637px;top:614px;color:#d2d200;font-size:12px;">268</div>
<div class="r" style="left:1635px;top:671px;width:51px;height:16px;background:#0000b4;border-top:1px solid #c00000;border-bottom:1px solid #c00000;box-sizing:border-box;"></div>
<div class="t " style="left:1636px;top:673px;color:#e6e6e6;font-size:12px;">0.59</div>
<div class="t " style="left:1637px;top:688px;color:#e6e6e6;font-size:12px;">0.50</div>
<div class="t " style="left:1637px;top:718px;color:#e6e6e6;font-size:12px;">0.00</div>
<div class="t " style="left:1637px;top:748px;color:#e6e6e6;font-size:12px;">-0.50</div>
<div class="t " style="left:1637px;top:800px;color:#e6e6e6;font-size:12px;">22.12</div>
<div class="t " style="left:1637px;top:830px;color:#e6e6e6;font-size:12px;">21.94</div>
<div class="t " style="left:1637px;top:861px;color:#e6e6e6;font-size:12px;">21.77</div>
<div class="t " style="left:1637px;top:892px;color:#e6e6e6;font-size:12px;">21.59</div>
<div class="t " style="left:1299px;top:101.5px;color:#f0f000;font-size:12px;">长线:红多，绿空</div>
<div class="t " style="left:1299px;top:113.5px;color:#f0f000;font-size:12px;">支撑线</div>
<div class="t " style="left:1299px;top:203.5px;color:#f0f000;font-size:12px;">压力线</div>
<div class="t " style="left:1299px;top:272.5px;color:#f0f000;font-size:12px;">强势线</div>
<div class="t " style="left:1299px;top:292.5px;color:#f0f000;font-size:12px;">平衡线</div>
<div class="t " style="left:58px;top:788.5px;color:#e6e6e6;font-size:12px;letter-spacing:0.15px;">分时买卖指标 强弱: 21.69</div>
<div class="t " style="left:202px;top:788.5px;color:#00e600;font-size:12px;letter-spacing:0.15px;">阻力: 22.07</div>
<div class="t " style="left:268.5px;top:788.5px;color:#00e600;font-size:12px;letter-spacing:0.15px;">支撑: 21.72</div>
<div class="t " style="left:336px;top:788.5px;color:#e6e6e6;font-size:12px;letter-spacing:0.15px;">现价: 21.89</div>
<div class="t " style="left:100px;top:865px;color:#f0f000;font-size:12px;letter-spacing:-1.5px;">★B</div>
<div class="t " style="left:315px;top:865px;color:#f0f000;font-size:12px;letter-spacing:-1.5px;">★B</div>
<div class="t " style="left:333px;top:865px;color:#f0f000;font-size:12px;letter-spacing:-1.5px;">★B</div>
<div class="t " style="left:508px;top:865px;color:#f0f000;font-size:12px;letter-spacing:-1.5px;">★B</div>
<div class="t " style="left:519px;top:865px;color:#f0f000;font-size:12px;letter-spacing:-1.5px;">★B</div>
<div class="t " style="left:576px;top:865px;color:#f0f000;font-size:12px;letter-spacing:-1.5px;">★B</div>
<div class="t " style="left:850px;top:865px;color:#f0f000;font-size:12px;letter-spacing:-1.5px;">★B</div>
<div class="t " style="left:909px;top:865px;color:#f0f000;font-size:12px;letter-spacing:-1.5px;">★B</div>
<div class="t " style="left:916px;top:865px;color:#f0f000;font-size:12px;letter-spacing:-1.5px;">★B</div>
<div class="t " style="left:1076px;top:865px;color:#f0f000;font-size:12px;letter-spacing:-1.5px;">★B</div>
<div class="t " style="left:1082px;top:865px;color:#f0f000;font-size:12px;letter-spacing:-1.5px;">★B</div>
<div class="t " style="left:628px;top:806px;color:#ff1e1e;font-size:12px;">★</div>
<div class="t " style="left:1154px;top:806px;color:#ff1e1e;font-size:12px;">★</div>
<svg width="1686" height="946" viewBox="0 0 1686 946" fill="none" stroke="#a0a0a0" stroke-width="1"><rect x="1600.5" y="54.5" width="11" height="10" rx="3"/><path d="M1606 62 v-4 M1603.3 59.3 L1606 56.5 L1608.7 59.3" stroke-width="1.4"/><rect x="1619.5" y="54.5" width="11" height="10" rx="2"/><rect x="1626" y="56" width="3" height="7" fill="#9a9a9a" stroke="none"/><path d="M1605 650 h8 l-4 4.5 z" fill="#d0d0d0" stroke="none"/><path d="M1623 649.5 l6 6 M1629 649.5 l-6 6"/><path d="M1605 793 h8 l-4 4.5 z" fill="#d0d0d0" stroke="none"/><path d="M1623 792.5 l6 6 M1629 792.5 l-6 6"/></svg>
<div class="t " style="left:25px;top:931px;color:#ff1e1e;font-size:13.5px;">09/14/三</div>
<div class="t " style="left:551px;top:931px;color:#ff1e1e;font-size:13.5px;">09/15/四</div>
<div class="t " style="left:1077px;top:931px;color:#ff1e1e;font-size:13.5px;">09/1</div>
<div class="r" style="left:1103px;top:930px;width:33px;height:15px;background:#0000a8;border-left:1px solid #c00000;border-right:1px solid #c00000;box-sizing:border-box;"></div>
<div class="t " style="left:1105px;top:932px;color:#e6e6e6;font-size:12px;">09:42</div>
<div class="t " style="left:1645px;top:932px;color:#e6e6e6;font-size:12px;">布局*</div>
<div class="r" style="left:3px;top:838px;width:51px;height:20px;background:#151515;"></div>
<div class="t" style="left:3px;top:838px;width:51px;height:20px;overflow:hidden;"><div class="t" style="left:-1px;top:5.5px;color:#dce4ee;font-size:12px;white-space:pre;">愇樂檸姒</div></div>
<div class="r" style="left:3px;top:860px;width:51px;height:20px;background:#151515;"></div>
<div class="t" style="left:3px;top:860px;width:51px;height:20px;overflow:hidden;"><div class="t" style="left:-1px;top:5.5px;color:#dce4ee;font-size:12px;white-space:pre;">鍚岃姳椤?</div></div>
<div class="r" style="left:3px;top:882px;width:51px;height:20px;background:#151515;"></div>
<div class="t" style="left:3px;top:882px;width:51px;height:20px;overflow:hidden;"><div class="t" style="left:1px;top:5.5px;color:#dce4ee;font-size:12px;white-space:pre;">鎵  浄瀹</div></div>
<div class="r" style="left:3px;top:904px;width:51px;height:20px;background:#151515;"></div>
<div class="t" style="left:3px;top:904px;width:51px;height:20px;overflow:hidden;"><div class="t" style="left:-9px;top:5.5px;color:#dce4ee;font-size:12px;white-space:pre;">：  紡涓嬬</div></div>
<div class="r" style="left:1685px;top:28px;width:2px;height:962px;background:#2a2a2c;"></div>
<div class="r" style="left:1687px;top:28px;width:233px;height:962px;background:#000;"></div>
<div class="t" style="left:1693px;top:34.5px;color:#f0f000;font-size:15px;">广州酒家</div>
<div class="t" style="left:1757px;top:34.5px;color:#f0f0f0;font-size:15px;letter-spacing:0.55px;">603043</div>
<div class="t" style="left:1812px;top:35.8px;color:#ff3c3c;font-size:10.5px;letter-spacing:-0.9px;">l000</div>
<div class="t" style="left:1693px;top:57.5px;color:#ff3232;font-size:19px;font-weight:bold;letter-spacing:-0.6px;">21.89</div>
<div class="t" style="left:1746px;top:60.2px;color:#ff3232;font-size:14.5px;">0.14</div>
<div class="t" style="left:1781px;top:60.2px;color:#ff3232;font-size:14.5px;letter-spacing:-0.3px;">0.64%</div>
<div class="r" style="left:1865px;top:33px;width:49px;height:48px;background:#1e1e1e;"></div>
<div class="t" style="left:1865px;top:39px;width:49px;text-align:center;color:#f0f0f0;font-size:12px;">食品饮料</div>
<div class="t" style="left:1865px;top:62px;width:49px;text-align:center;color:#00d200;font-size:12.5px;">-0.64%</div>
<div class="t" style="left:1694px;top:86px;width:51px;height:22px;box-sizing:border-box;border:1px solid #ff3c3c;color:#ff3c3c;font-size:14px;text-align:center;line-height:19px;">买</div>
<div class="t" style="left:1750px;top:86px;width:51px;height:22px;box-sizing:border-box;border:1px solid #3c9af0;color:#3c9af0;font-size:14px;text-align:center;line-height:19px;">卖</div>
<div class="t" style="left:1806px;top:86px;width:51px;height:22px;box-sizing:border-box;border:1px solid #a0a0a0;color:#d0d0d0;font-size:14px;text-align:center;line-height:19px;">查</div>
<div class="t" style="left:1862px;top:86px;width:51px;height:22px;box-sizing:border-box;border:1px solid #a0a0a0;color:#d0d0d0;font-size:14px;text-align:center;line-height:19px;">警</div>
<div class="r" style="left:1687px;top:113px;width:233px;height:1px;background:#800000;"></div>
<div class="t" style="left:1695px;top:116.0px;color:#e6e6e6;font-size:14px;">卖五</div>
<div class="t" style="right:124px;top:116.0px;color:#ff3c3c;font-size:14px;">21.93</div>
<div class="t" style="right:58px;top:116.0px;color:#c8c800;font-size:14px;">31</div>
<div class="t" style="left:1695px;top:134.0px;color:#e6e6e6;font-size:14px;">卖四</div>
<div class="t" style="right:124px;top:134.0px;color:#ff3c3c;font-size:14px;">21.92</div>
<div class="t" style="right:58px;top:134.0px;color:#c8c800;font-size:14px;">37</div>
<div class="t" style="left:1695px;top:152.0px;color:#e6e6e6;font-size:14px;">卖三</div>
<div class="t" style="right:124px;top:152.0px;color:#ff3c3c;font-size:14px;">21.91</div>
<div class="t" style="right:58px;top:152.0px;color:#c8c800;font-size:14px;">13</div>
<div class="t" style="left:1695px;top:170.0px;color:#e6e6e6;font-size:14px;">卖二</div>
<div class="t" style="right:124px;top:170.0px;color:#ff3c3c;font-size:14px;">21.90</div>
<div class="t" style="right:58px;top:170.0px;color:#c8c800;font-size:14px;">7</div>
<div class="t" style="left:1695px;top:188.0px;color:#e6e6e6;font-size:14px;">卖一</div>
<div class="t" style="right:124px;top:188.0px;color:#ff3c3c;font-size:14px;">21.89</div>
<div class="t" style="right:58px;top:188.0px;color:#c8c800;font-size:14px;">10</div>
<div class="t" style="left:1695px;top:208.0px;color:#e6e6e6;font-size:14px;">买一</div>
<div class="t" style="right:124px;top:208.0px;color:#ff3c3c;font-size:14px;">21.87</div>
<div class="t" style="right:58px;top:208.0px;color:#c8c800;font-size:14px;">1</div>
<div class="t" style="left:1695px;top:226.0px;color:#e6e6e6;font-size:14px;">买二</div>
<div class="t" style="right:124px;top:226.0px;color:#ff3c3c;font-size:14px;">21.86</div>
<div class="t" style="right:58px;top:226.0px;color:#c8c800;font-size:14px;">8</div>
<div class="t" style="left:1695px;top:244.0px;color:#e6e6e6;font-size:14px;">买三</div>
<div class="t" style="right:124px;top:244.0px;color:#ff3c3c;font-size:14px;">21.85</div>
<div class="t" style="right:58px;top:244.0px;color:#c8c800;font-size:14px;">33</div>
<div class="t" style="left:1695px;top:262.0px;color:#e6e6e6;font-size:14px;">买四</div>
<div class="t" style="right:124px;top:262.0px;color:#ff3c3c;font-size:14px;">21.84</div>
<div class="t" style="right:58px;top:262.0px;color:#c8c800;font-size:14px;">7</div>
<div class="t" style="left:1695px;top:280.0px;color:#e6e6e6;font-size:14px;">买五</div>
<div class="t" style="right:124px;top:280.0px;color:#ff3c3c;font-size:14px;">21.83</div>
<div class="t" style="right:58px;top:280.0px;color:#c8c800;font-size:14px;">6</div>
<div class="t" style="right:9px;top:189.0px;color:#00c800;font-size:12px;">-1</div>
<div class="r" style="left:1687px;top:204px;width:83px;height:1px;background:#d28c1e;"></div>
<div class="r" style="left:1770px;top:204px;width:150px;height:1px;background:#2a8ae0;"></div>
<div class="r" style="left:1687px;top:297px;width:233px;height:1px;background:#800000;"></div>
<div class="t" style="left:1695px;top:301.0px;color:#e6e6e6;font-size:14px;">涨停</div>
<div class="t" style="right:124px;top:301.0px;color:#ff3c3c;font-size:14px;">23.93</div>
<div class="t" style="left:1811px;top:301.0px;color:#e6e6e6;font-size:14px;">跌停</div>
<div class="t" style="right:8px;top:301.0px;color:#00e600;font-size:14px;">19.58</div>
<div class="t" style="left:1695px;top:320.0px;color:#e6e6e6;font-size:14px;">最高</div>
<div class="t" style="right:124px;top:320.0px;color:#ff3c3c;font-size:14px;">22.13</div>
<div class="t" style="left:1811px;top:320.0px;color:#e6e6e6;font-size:14px;">量比</div>
<div class="t" style="right:8px;top:320.0px;color:#ff3c3c;font-size:14px;">1.63</div>
<div class="t" style="left:1695px;top:339.0px;color:#e6e6e6;font-size:14px;">最低</div>
<div class="t" style="right:124px;top:339.0px;color:#00e600;font-size:14px;">21.69</div>
<div class="t" style="left:1811px;top:339.0px;color:#e6e6e6;font-size:14px;">市值</div>
<div class="t" style="right:8px;top:339.0px;color:#e6e6e6;font-size:14px;">124.2亿</div>
<div class="t" style="left:1695px;top:358.0px;color:#e6e6e6;font-size:14px;">现量</div>
<div class="t" style="right:124px;top:358.0px;color:#ff3c3c;font-size:14px;">6</div>
<div class="t" style="left:1811px;top:358.0px;color:#e6e6e6;font-size:14px;">总量</div>
<div class="t" style="right:8px;top:358.0px;color:#e6e6e6;font-size:14px;">13033</div>
<div class="t" style="left:1695px;top:377.0px;color:#e6e6e6;font-size:14px;">外盘</div>
<div class="t" style="right:124px;top:377.0px;color:#ff3c3c;font-size:14px;">7539</div>
<div class="t" style="left:1811px;top:377.0px;color:#e6e6e6;font-size:14px;">内盘</div>
<div class="t" style="right:8px;top:377.0px;color:#00e600;font-size:14px;">5494</div>
<div class="r" style="left:1687px;top:394px;width:233px;height:1px;background:#800000;"></div>
<div class="t" style="left:1695px;top:398.0px;color:#e6e6e6;font-size:14px;">换手</div>
<div class="t" style="right:124px;top:398.0px;color:#e6e6e6;font-size:14px;">0.23%</div>
<div class="t" style="left:1811px;top:398.0px;color:#e6e6e6;font-size:14px;">股本</div>
<div class="t" style="right:8px;top:398.0px;color:#e6e6e6;font-size:14px;">5.67亿</div>
<div class="t" style="left:1695px;top:417.0px;color:#e6e6e6;font-size:14px;">净资</div>
<div class="t" style="right:124px;top:417.0px;color:#e6e6e6;font-size:14px;">5.00</div>
<div class="t" style="left:1811px;top:417.0px;color:#e6e6e6;font-size:14px;">流通</div>
<div class="t" style="right:8px;top:417.0px;color:#e6e6e6;font-size:14px;">5.67亿</div>
<div class="t" style="left:1695px;top:436.0px;color:#e6e6e6;font-size:14px;">收益<span style="letter-spacing:-1.3px;">(</span><span style="display:inline-block;width:7.4px;transform:scaleX(0.53);transform-origin:0 50%;">二</span><span style="letter-spacing:-1px;">)</span></div>
<div class="t" style="right:124px;top:436.0px;color:#e6e6e6;font-size:14px;">0.100</div>
<div class="t" style="left:1811px;top:436.0px;color:#e6e6e6;font-size:14px;">PE(动)</div>
<div class="t" style="right:8px;top:436.0px;color:#e6e6e6;font-size:14px;">114.0</div>
<div class="r" style="left:1687px;top:456px;width:233px;height:1px;background:#800000;"></div>
<div class="t" style="left:1694px;top:460.5px;color:#e6e6e6;font-size:14px;letter-spacing:-0.15px;">交易状态: 连续竞价 10:56:59</div>
<div class="r" style="left:1687px;top:479px;width:233px;height:1px;background:#800000;"></div>
<div class="t" style="left:1695px;top:482.0px;color:#e6e6e6;font-size:14px;">净流入额</div>
<div class="t" style="right:47px;top:482.0px;color:#ff3c3c;font-size:14px;">451.3万</div>
<div class="t" style="right:8px;top:482.0px;color:#ff3c3c;font-size:14px;">16%</div>
<div class="t" style="left:1695px;top:501.0px;color:#e6e6e6;font-size:14px;">大宗流入</div>
<div class="t" style="right:47px;top:501.0px;color:#00dc00;font-size:14px;">-53.8万</div>
<div class="t" style="right:8px;top:501.0px;color:#00dc00;font-size:14px;">-2%</div>
<div class="t" style="left:1695px;top:520.0px;color:#e6e6e6;font-size:14px;">5日净流入额</div>
<div class="t" style="right:47px;top:520.0px;color:#00dc00;font-size:14px;">-2125万</div>
<div class="t" style="right:8px;top:520.0px;color:#00dc00;font-size:14px;">-10%</div>
<div class="t" style="left:1695px;top:539.0px;color:#e6e6e6;font-size:14px;">5日大宗流入</div>
<div class="t" style="right:47px;top:539.0px;color:#00dc00;font-size:14px;">-1251万</div>
<div class="t" style="right:8px;top:539.0px;color:#00dc00;font-size:14px;">-6%</div>
<div class="r" style="left:1787px;top:485px;width:4px;height:7px;background:#ff3c3c;"></div>
<div class="r" style="left:1787px;top:504px;width:1px;height:8px;background:#00c800;"></div>
<div class="r" style="left:1787px;top:523px;width:22px;height:7px;background:#00c800;"></div>
<div class="r" style="left:1787px;top:542px;width:12px;height:7px;background:#00c800;"></div>
<div class="r" style="left:1687px;top:558px;width:233px;height:1px;background:#800000;"></div>
<div class="t" style="left:1695px;top:561.0px;color:#e6e6e6;font-size:14px;letter-spacing:-0.25px;">10:53</div>
<div class="t" style="right:121px;top:561.0px;color:#ff3c3c;font-size:14px;">21.84</div>
<div class="t" style="right:61px;top:561.0px;color:#c8c800;font-size:14px;">2</div>
<div class="t" style="left:1872px;top:561.0px;color:#00dc00;font-size:14px;">S</div>
<div class="t" style="right:8.5px;top:561.0px;color:#aaaaaa;font-size:14px;">1</div>
<div class="t" style="left:1695px;top:579.0px;color:#e6e6e6;font-size:14px;letter-spacing:-0.25px;">10:53</div>
<div class="t" style="right:121px;top:579.0px;color:#ff3c3c;font-size:14px;">21.84</div>
<div class="t" style="right:61px;top:579.0px;color:#c8c800;font-size:14px;">1</div>
<div class="t" style="left:1872px;top:579.0px;color:#00dc00;font-size:14px;">S</div>
<div class="t" style="right:8.5px;top:579.0px;color:#aaaaaa;font-size:14px;">1</div>
<div class="t" style="left:1695px;top:597.0px;color:#e6e6e6;font-size:14px;letter-spacing:-0.25px;">10:53</div>
<div class="t" style="right:121px;top:597.0px;color:#ff3c3c;font-size:14px;">21.85</div>
<div class="t" style="right:61px;top:597.0px;color:#c8c800;font-size:14px;">1</div>
<div class="t" style="left:1872px;top:597.0px;color:#00dc00;font-size:14px;">S</div>
<div class="t" style="right:8.5px;top:597.0px;color:#aaaaaa;font-size:14px;">1</div>
<div class="t" style="left:1695px;top:615.0px;color:#e6e6e6;font-size:14px;letter-spacing:-0.25px;">10:53</div>
<div class="t" style="right:121px;top:615.0px;color:#ff3c3c;font-size:14px;">21.85</div>
<div class="t" style="right:61px;top:615.0px;color:#c8c800;font-size:14px;">3</div>
<div class="t" style="left:1872px;top:615.0px;color:#00dc00;font-size:14px;">S</div>
<div class="t" style="right:8.5px;top:615.0px;color:#aaaaaa;font-size:14px;">3</div>
<div class="t" style="left:1695px;top:633.0px;color:#e6e6e6;font-size:14px;letter-spacing:-0.25px;">10:53</div>
<div class="t" style="right:121px;top:633.0px;color:#ff3c3c;font-size:14px;">21.85</div>
<div class="t" style="right:61px;top:633.0px;color:#c8c800;font-size:14px;">1</div>
<div class="t" style="left:1872px;top:633.0px;color:#00dc00;font-size:14px;">S</div>
<div class="t" style="right:8.5px;top:633.0px;color:#aaaaaa;font-size:14px;">1</div>
<div class="t" style="left:1695px;top:651.0px;color:#e6e6e6;font-size:14px;letter-spacing:-0.25px;">10:54</div>
<div class="t" style="right:121px;top:651.0px;color:#ff3c3c;font-size:14px;">21.86</div>
<div class="t" style="right:61px;top:651.0px;color:#c8c800;font-size:14px;">1</div>
<div class="t" style="left:1872px;top:651.0px;color:#00dc00;font-size:14px;">S</div>
<div class="t" style="right:8.5px;top:651.0px;color:#aaaaaa;font-size:14px;">1</div>
<div class="t" style="left:1695px;top:669.0px;color:#e6e6e6;font-size:14px;letter-spacing:-0.25px;">10:54</div>
<div class="t" style="right:121px;top:669.0px;color:#ff3c3c;font-size:14px;">21.86</div>
<div class="t" style="right:61px;top:669.0px;color:#c8c800;font-size:14px;">4</div>
<div class="t" style="left:1872px;top:669.0px;color:#00dc00;font-size:14px;">S</div>
<div class="t" style="right:8.5px;top:669.0px;color:#aaaaaa;font-size:14px;">3</div>
<div class="t" style="left:1695px;top:687.0px;color:#e6e6e6;font-size:14px;letter-spacing:-0.25px;">10:54</div>
<div class="t" style="right:121px;top:687.0px;color:#ff3c3c;font-size:14px;">21.86</div>
<div class="t" style="right:61px;top:687.0px;color:#c8c800;font-size:14px;">2</div>
<div class="t" style="left:1872px;top:687.0px;color:#ff3c3c;font-size:14px;">B</div>
<div class="t" style="right:8.5px;top:687.0px;color:#aaaaaa;font-size:14px;">1</div>
<div class="t" style="left:1695px;top:705.0px;color:#e6e6e6;font-size:14px;letter-spacing:-0.25px;">10:54</div>
<div class="t" style="right:121px;top:705.0px;color:#ff3c3c;font-size:14px;">21.86</div>
<div class="t" style="right:61px;top:705.0px;color:#c8c800;font-size:14px;">3</div>
<div class="t" style="left:1872px;top:705.0px;color:#ff3c3c;font-size:14px;">B</div>
<div class="t" style="right:8.5px;top:705.0px;color:#aaaaaa;font-size:14px;">2</div>
<div class="t" style="left:1695px;top:723.0px;color:#e6e6e6;font-size:14px;letter-spacing:-0.25px;">10:54</div>
<div class="t" style="right:121px;top:723.0px;color:#ff3c3c;font-size:14px;">21.85</div>
<div class="t" style="right:61px;top:723.0px;color:#c8c800;font-size:14px;">2</div>
<div class="t" style="left:1872px;top:723.0px;color:#00dc00;font-size:14px;">S</div>
<div class="t" style="right:8.5px;top:723.0px;color:#aaaaaa;font-size:14px;">2</div>
<div class="t" style="left:1695px;top:741.0px;color:#e6e6e6;font-size:14px;letter-spacing:-0.25px;">10:54</div>
<div class="t" style="right:121px;top:741.0px;color:#ff3c3c;font-size:14px;">21.85</div>
<div class="t" style="right:61px;top:741.0px;color:#c8c800;font-size:14px;">1</div>
<div class="t" style="left:1872px;top:741.0px;color:#00dc00;font-size:14px;">S</div>
<div class="t" style="right:8.5px;top:741.0px;color:#aaaaaa;font-size:14px;">1</div>
<div class="t" style="left:1695px;top:759.0px;color:#e6e6e6;font-size:14px;letter-spacing:-0.25px;">10:54</div>
<div class="t" style="right:121px;top:759.0px;color:#ff3c3c;font-size:14px;">21.86</div>
<div class="t" style="right:61px;top:759.0px;color:#c8c800;font-size:14px;">6</div>
<div class="t" style="left:1872px;top:759.0px;color:#ff3c3c;font-size:14px;">B</div>
<div class="t" style="right:8.5px;top:759.0px;color:#aaaaaa;font-size:14px;">1</div>
<div class="t" style="left:1695px;top:777.0px;color:#e6e6e6;font-size:14px;letter-spacing:-0.25px;">10:55</div>
<div class="t" style="right:121px;top:777.0px;color:#ff3c3c;font-size:14px;">21.86</div>
<div class="t" style="right:61px;top:777.0px;color:#c8c800;font-size:14px;">2</div>
<div class="t" style="left:1872px;top:777.0px;color:#00dc00;font-size:14px;">S</div>
<div class="t" style="right:8.5px;top:777.0px;color:#aaaaaa;font-size:14px;">1</div>
<div class="t" style="left:1695px;top:795.0px;color:#e6e6e6;font-size:14px;letter-spacing:-0.25px;">10:55</div>
<div class="t" style="right:121px;top:795.0px;color:#ff3c3c;font-size:14px;">21.86</div>
<div class="t" style="right:61px;top:795.0px;color:#c8c800;font-size:14px;">1</div>
<div class="t" style="left:1872px;top:795.0px;color:#00dc00;font-size:14px;">S</div>
<div class="t" style="right:8.5px;top:795.0px;color:#aaaaaa;font-size:14px;">1</div>
<div class="t" style="left:1695px;top:813.0px;color:#e6e6e6;font-size:14px;letter-spacing:-0.25px;">10:55</div>
<div class="t" style="right:121px;top:813.0px;color:#ff3c3c;font-size:14px;">21.85</div>
<div class="t" style="right:61px;top:813.0px;color:#c8c800;font-size:14px;">4</div>
<div class="t" style="left:1872px;top:813.0px;color:#00dc00;font-size:14px;">S</div>
<div class="t" style="right:8.5px;top:813.0px;color:#aaaaaa;font-size:14px;">1</div>
<div class="t" style="left:1695px;top:831.0px;color:#e6e6e6;font-size:14px;letter-spacing:-0.25px;">10:55</div>
<div class="t" style="right:121px;top:831.0px;color:#ff3c3c;font-size:14px;">21.87</div>
<div class="t" style="right:61px;top:831.0px;color:#c8c800;font-size:14px;">4</div>
<div class="t" style="left:1872px;top:831.0px;color:#ff3c3c;font-size:14px;">B</div>
<div class="t" style="right:8.5px;top:831.0px;color:#aaaaaa;font-size:14px;">3</div>
<div class="t" style="left:1695px;top:849.0px;color:#e6e6e6;font-size:14px;letter-spacing:-0.25px;">10:56</div>
<div class="t" style="right:121px;top:849.0px;color:#ff3c3c;font-size:14px;">21.87</div>
<div class="t" style="right:61px;top:849.0px;color:#c8c800;font-size:14px;">1</div>
<div class="t" style="left:1872px;top:849.0px;color:#00dc00;font-size:14px;">S</div>
<div class="t" style="right:8.5px;top:849.0px;color:#aaaaaa;font-size:14px;">1</div>
<div class="t" style="left:1695px;top:867.0px;color:#e6e6e6;font-size:14px;letter-spacing:-0.25px;">10:56</div>
<div class="t" style="right:121px;top:867.0px;color:#ff3c3c;font-size:14px;">21.89</div>
<div class="t" style="right:61px;top:867.0px;color:#c8c800;font-size:14px;">8</div>
<div class="t" style="left:1872px;top:867.0px;color:#ff3c3c;font-size:14px;">B</div>
<div class="t" style="right:8.5px;top:867.0px;color:#aaaaaa;font-size:14px;">3</div>
<div class="t" style="left:1695px;top:885.0px;color:#e6e6e6;font-size:14px;letter-spacing:-0.25px;">10:56</div>
<div class="t" style="right:121px;top:885.0px;color:#ff3c3c;font-size:14px;">21.87</div>
<div class="t" style="right:61px;top:885.0px;color:#c8c800;font-size:14px;">3</div>
<div class="t" style="left:1872px;top:885.0px;color:#00dc00;font-size:14px;">S</div>
<div class="t" style="right:8.5px;top:885.0px;color:#aaaaaa;font-size:14px;">1</div>
<div class="t" style="left:1695px;top:903.0px;color:#e6e6e6;font-size:14px;letter-spacing:-0.25px;">10:56</div>
<div class="t" style="right:121px;top:903.0px;color:#ff3c3c;font-size:14px;">21.87</div>
<div class="t" style="right:61px;top:903.0px;color:#c8c800;font-size:14px;">1</div>
<div class="t" style="left:1872px;top:903.0px;color:#00dc00;font-size:14px;">S</div>
<div class="t" style="right:8.5px;top:903.0px;color:#aaaaaa;font-size:14px;">1</div>
<div class="t" style="left:1695px;top:921.0px;color:#e6e6e6;font-size:14px;letter-spacing:-0.25px;">10:56</div>
<div class="t" style="right:121px;top:921.0px;color:#ff3c3c;font-size:14px;">21.87</div>
<div class="t" style="right:61px;top:921.0px;color:#c8c800;font-size:14px;">1</div>
<div class="t" style="left:1872px;top:921.0px;color:#00dc00;font-size:14px;">S</div>
<div class="t" style="right:8.5px;top:921.0px;color:#aaaaaa;font-size:14px;">1</div>
<div class="t" style="left:1695px;top:939.0px;color:#e6e6e6;font-size:14px;letter-spacing:-0.25px;">10:56</div>
<div class="t" style="right:121px;top:939.0px;color:#ff3c3c;font-size:14px;">21.89</div>
<div class="t" style="right:61px;top:939.0px;color:#c8c800;font-size:14px;">6</div>
<div class="t" style="left:1872px;top:939.0px;color:#ff3c3c;font-size:14px;">B</div>
<div class="t" style="right:8.5px;top:939.0px;color:#aaaaaa;font-size:14px;">5</div>
<div class="r" style="left:1687px;top:971px;width:233px;height:1px;background:#2a2a2c;"></div>
<div class="r" style="left:1687px;top:972px;width:233px;height:18px;background:#0c0c0d;"></div>
<div class="t" style="left:1688px;top:973px;width:28px;height:17px;background:#e03038;color:#f0f0f0;font-size:13px;text-align:center;line-height:17px;">笔</div>
<div class="t" style="left:1717px;top:973px;width:28px;height:17px;background:#1d1d1f;color:#f0f0f0;font-size:13px;text-align:center;line-height:17px;">价</div>
<div class="t" style="left:1746px;top:973px;width:28px;height:17px;background:#1d1d1f;color:#f0f0f0;font-size:13px;text-align:center;line-height:17px;">细</div>
<div class="t" style="left:1775px;top:973px;width:28px;height:17px;background:#1d1d1f;color:#f0f0f0;font-size:13px;text-align:center;line-height:17px;">日</div>
<div class="t" style="left:1804px;top:973px;width:28px;height:17px;background:#1d1d1f;color:#f0f0f0;font-size:13px;text-align:center;line-height:17px;">联</div>
<div class="t" style="left:1833px;top:973px;width:28px;height:17px;background:#1d1d1f;color:#f0f0f0;font-size:13px;text-align:center;line-height:17px;">值</div>
<div class="t" style="left:1862px;top:973px;width:28px;height:17px;background:#1d1d1f;color:#f0f0f0;font-size:13px;text-align:center;line-height:17px;">主</div>
<div class="t" style="left:1891px;top:973px;width:28px;height:17px;background:#1d1d1f;color:#f0f0f0;font-size:13px;text-align:center;line-height:17px;">筹</div>
<div class="r" style="left:0px;top:946px;width:1686px;height:2px;background:#0a0a0a;"></div>
<div class="r" style="left:0px;top:948px;width:1686px;height:18px;background:#1e1e20;"></div>
<div class="r" style="left:0px;top:966px;width:1686px;height:3px;background:#0a0a0a;"></div>
<div class="r" style="left:0px;top:969px;width:1686px;height:21px;background:#1e1e20;"></div>
<div class="r" style="left:0px;top:990px;width:1920px;height:2px;background:#0e0f11;"></div>
<div class="t " style="left:5px;top:951px;color:#ff3c3c;font-size:12px;">成交量</div>
<div class="r" style="left:44px;top:948px;width:1px;height:18px;background:#0a0a0a;"></div>
<div class="t " style="left:49px;top:951px;color:#e6e6e6;font-size:12px;">量比</div>
<div class="r" style="left:76px;top:948px;width:1px;height:18px;background:#0a0a0a;"></div>
<div class="t " style="left:81px;top:951px;color:#e6e6e6;font-size:12px;">买卖力道</div>
<div class="r" style="left:132px;top:948px;width:1px;height:18px;background:#0a0a0a;"></div>
<div class="t " style="left:137px;top:951px;color:#e6e6e6;font-size:12px;">竞价图</div>
<div class="r" style="left:176px;top:948px;width:1px;height:18px;background:#0a0a0a;"></div>
<div class="t " style="left:181px;top:951px;color:#e6e6e6;font-size:12px;">资金驱动力</div>
<div class="r" style="left:244px;top:948px;width:1px;height:18px;background:#0a0a0a;"></div>
<div class="t " style="left:249px;top:951px;color:#e6e6e6;font-size:12px;">资金博弈</div>
<div class="r" style="left:300px;top:948px;width:1px;height:18px;background:#0a0a0a;"></div>
<div class="t " style="left:305px;top:951px;color:#e6e6e6;font-size:12px;">大单动向</div>
<div class="r" style="left:356px;top:948px;width:1px;height:18px;background:#0a0a0a;"></div>
<div class="t " style="left:361px;top:951px;color:#e6e6e6;font-size:12px;">涨跌动因</div>
<div class="r" style="left:412px;top:948px;width:1px;height:18px;background:#0a0a0a;"></div>
<div class="t " style="left:417px;top:951px;color:#e6e6e6;font-size:12px;">大单差分</div>
<div class="r" style="left:468px;top:948px;width:1px;height:18px;background:#0a0a0a;"></div>
<div class="t " style="left:473px;top:951px;color:#e6e6e6;font-size:12px;">总买总卖</div>
<div class="r" style="left:524px;top:948px;width:1px;height:18px;background:#0a0a0a;"></div>
<div class="t " style="left:529px;top:951px;color:#e6e6e6;font-size:12px;">净挂净撤</div>
<div class="r" style="left:580px;top:948px;width:1px;height:18px;background:#0a0a0a;"></div>
<div class="t " style="left:585px;top:951px;color:#e6e6e6;font-size:12px;">撤单累计</div>
<div class="r" style="left:636px;top:948px;width:1px;height:18px;background:#0a0a0a;"></div>
<div class="r" style="left:0px;top:948px;width:1px;height:18px;background:#0a0a0a;"></div>
<div class="r" style="left:1603px;top:948px;width:1px;height:18px;background:#0a0a0a;"></div>
<div class="r" style="left:1634px;top:948px;width:1px;height:18px;background:#0a0a0a;"></div>
<div class="r" style="left:1659px;top:948px;width:1px;height:18px;background:#0a0a0a;"></div>
<div class="r" style="left:1684px;top:948px;width:1px;height:18px;background:#0a0a0a;"></div>
<div class="t " style="left:1607px;top:951px;color:#e6e6e6;font-size:12px;">指标</div>
<div class="t " style="left:1635px;top:950px;color:#e6e6e6;font-size:14px;width:24px;text-align:center;">+</div>
<div class="t " style="left:1660px;top:950px;color:#e6e6e6;font-size:14px;width:24px;text-align:center;">−</div>
<svg width="30" height="1000" viewBox="0 0 30 1000" fill="none" stroke="#9a9a9a" stroke-width="1"><rect x="5.5" y="973.5" width="11" height="11" rx="1.5"/><rect x="7" y="975" width="8" height="3" fill="#9a9a9a" stroke="none"/></svg>
<div class="r" style="left:21px;top:969px;width:1px;height:21px;background:#0a0a0a;"></div>
<div class="t " style="left:23px;top:974px;color:#e6e6e6;font-size:12px;width:61px;text-align:center;">关联报价</div>
<div class="r" style="left:83px;top:969px;width:1px;height:21px;background:#0a0a0a;"></div>
<div class="t " style="left:85px;top:974px;color:#e6e6e6;font-size:12px;width:61px;text-align:center;">资金流向</div>
<div class="r" style="left:145px;top:969px;width:1px;height:21px;background:#0a0a0a;"></div>
<div class="t " style="left:147px;top:974px;color:#e6e6e6;font-size:12px;width:61px;text-align:center;">主力轨迹</div>
<div class="r" style="left:207px;top:969px;width:1px;height:21px;background:#0a0a0a;"></div>
<div class="t " style="left:209px;top:974px;color:#e6e6e6;font-size:12px;width:61px;text-align:center;">相似K线</div>
<div class="r" style="left:269px;top:969px;width:1px;height:21px;background:#0a0a0a;"></div>
<div class="t " style="left:271px;top:974px;color:#e6e6e6;font-size:12px;width:61px;text-align:center;">逐笔委托</div>
<div class="r" style="left:331px;top:969px;width:1px;height:21px;background:#0a0a0a;"></div>
<div class="t " style="left:333px;top:974px;color:#f59a23;font-size:12px;width:61px;text-align:center;">综合资讯</div>
<div class="r" style="left:393px;top:969px;width:1px;height:21px;background:#0a0a0a;"></div>
<div class="t " style="left:395px;top:974px;color:#e6e6e6;font-size:12px;width:61px;text-align:center;">行业数据</div>
<div class="r" style="left:455px;top:969px;width:1px;height:21px;background:#0a0a0a;"></div>
<div class="t " style="left:457px;top:974px;color:#f59a23;font-size:12px;width:61px;text-align:center;">互动问答</div>
<div class="r" style="left:517px;top:969px;width:1px;height:21px;background:#0a0a0a;"></div>
<div class="t " style="left:519px;top:974px;color:#f59a23;font-size:12px;width:61px;text-align:center;">机构调研</div>
<div class="r" style="left:579px;top:969px;width:1px;height:21px;background:#0a0a0a;"></div>
<div class="t " style="left:581px;top:974px;color:#e6e6e6;font-size:12px;width:61px;text-align:center;">扫雷宝</div>
<div class="r" style="left:641px;top:969px;width:1px;height:21px;background:#0a0a0a;"></div>
<div class="r" style="left:1634px;top:969px;width:1px;height:21px;background:#0a0a0a;"></div>
<div class="r" style="left:1684px;top:969px;width:1px;height:21px;background:#0a0a0a;"></div>
<div class="t " style="left:1635px;top:974px;color:#c8c800;font-size:12px;width:49px;text-align:center;">侧边栏</div>
<div class="r" style="left:0px;top:992px;width:1920px;height:21px;background:#222831;"></div>
<div class="r" style="left:0px;top:1013px;width:1920px;height:27px;background:#181c24;"></div>
<div class="r" style="left:0px;top:1040px;width:1920px;height:2px;background:#3e4434;background:linear-gradient(90deg,#3e4434 0%,#3e4434 60%,#2c3a26 100%);"></div>
<svg width="24" height="1042" viewBox="0 0 24 1042"><defs><linearGradient id="cg" x1="0" y1="0" x2="0" y2="1"><stop offset="0" stop-color="#a8acb5"/><stop offset="1" stop-color="#7a7f89"/></linearGradient></defs><circle cx="10.4" cy="1027.4" r="7.6" fill="url(#cg)"/><path d="M6.9 1024 l3.5 3.2 l3.5 -3.2 M6.9 1027.6 l3.5 3.2 l3.5 -3.2" fill="none" stroke="#22252c" stroke-width="1.2"/></svg>
<div class="t " style="left:26px;top:1022px;color:#d8d8d8;font-size:12px;">上证</div>
<div class="t " style="left:54px;top:1022px;color:#55e620;font-size:12px;">3162.84</div>
<div class="t " style="left:108px;top:1022px;color:#55e620;font-size:12px;">-37.08</div>
<div class="t " style="left:153px;top:1022px;color:#55e620;font-size:12px;">-1.16%</div>
<div class="t " style="left:196px;top:1022px;color:#d8d8d8;font-size:12px;">1774亿</div>
<div class="t " style="left:245px;top:1022px;color:#d8d8d8;font-size:12px;">深证</div>
<div class="t " style="left:273px;top:1022px;color:#55e620;font-size:12px;">11398.0</div>
<div class="t " style="left:322px;top:1022px;color:#55e620;font-size:12px;">-129.00</div>
<div class="t " style="left:371px;top:1022px;color:#55e620;font-size:12px;">-1.12%</div>
<div class="t " style="left:415px;top:1022px;color:#d8d8d8;font-size:12px;">2371亿</div>
<div class="t " style="left:464px;top:1022px;color:#d8d8d8;font-size:12px;">沪深</div>
<div class="t " style="left:492px;top:1022px;color:#55e620;font-size:12px;">3972.03</div>
<div class="t " style="left:546px;top:1022px;color:#55e620;font-size:12px;">-55.09</div>
<div class="t " style="left:591px;top:1022px;color:#55e620;font-size:12px;">-1.37%</div>
<div class="t " style="left:635px;top:1022px;color:#d8d8d8;font-size:12px;">1222亿</div>
<div class="t " style="left:684px;top:1022px;color:#d8d8d8;font-size:12px;">创业</div>
<div class="t " style="left:713px;top:1022px;color:#55e620;font-size:12px;">2392.82</div>
<div class="t " style="left:766px;top:1022px;color:#55e620;font-size:12px;">-31.37</div>
<div class="t " style="left:811px;top:1022px;color:#55e620;font-size:12px;">-1.29%</div>
<div class="t " style="left:855px;top:1022px;color:#d8d8d8;font-size:12px;">779.1亿</div>
<div class="t " style="left:904px;top:1022px;color:#d8d8d8;font-size:12px;">科创</div>
<div class="t " style="left:934px;top:1022px;color:#ff2828;font-size:12px;">1013.81</div>
<div class="t " style="left:991px;top:1022px;color:#ff2828;font-size:12px;">13.73</div>
<div class="t " style="left:1032px;top:1022px;color:#ff2828;font-size:12px;">1.37%</div>
<div class="t " style="left:1075px;top:1022px;color:#d8d8d8;font-size:12px;">239.5亿</div>
<svg width="1400" height="1042" viewBox="0 0 1400 1042" shape-rendering="crispEdges"><rect x="1128.5" y="1021.5" width="49" height="6" fill="#181c24" stroke="#fff"/><rect x="1141" y="1022" width="11" height="5" fill="#f00"/><rect x="1152" y="1022" width="14" height="5" fill="#0a8a0a"/><rect x="1180.5" y="1021.5" width="49" height="6" fill="#181c24" stroke="#fff"/><rect x="1193" y="1022" width="12" height="5" fill="#f00"/></svg>
<div class="t " style="left:1131px;top:1027px;color:#10b010;font-size:10px;font-weight:bold;letter-spacing:2.4px;">=↓=↑=↓</div>
<div class="t " style="left:1183px;top:1027px;color:#10b010;font-size:10px;font-weight:bold;letter-spacing:2.4px;">=↑=↑=↓</div>
<div class="r" style="left:1216px;top:1009px;width:142px;height:24px;background:#f3f7fd;border-radius:2px;box-shadow:0 0 1px #9ab;"></div>
<svg width="1400" height="1042" viewBox="0 0 1400 1042"><g transform="rotate(-13 1208 1020)"><rect x="1195.5" y="1007.5" width="25" height="25" rx="4" fill="#3fae33"/><path d="M1215 1013.5 C1209 1011.5 1201.5 1012.5 1201 1016.5 C1200.6 1020 1214.5 1019.5 1214.5 1023.5 C1214.5 1027.5 1205 1028 1200 1025.5" fill="none" stroke="#fff" stroke-width="3.2" stroke-linecap="round"/></g><path d="M1259.5 1015.8 A6.8 6.8 0 1 1 1251 1026.2 A8.5 8.5 0 0 0 1259.5 1015.8 Z" fill="#4a5062"/><circle cx="1275" cy="1018.5" r="1.7" fill="none" stroke="#4a5062" stroke-width="1.3"/><path d="M1281.5 1022 a1.6 1.6 0 1 1 1.6 1.6 q-0.3 2 -2.2 3 q1.2 -1.4 0.6 -3 z" fill="#4a5062"/><circle cx="1283" cy="1022.3" r="1.7" fill="#4a5062"/><rect x="1294" y="1015.5" width="14.5" height="11" rx="1.8" fill="none" stroke="#4a5062" stroke-width="1.5"/><path d="M1296.5 1018.6 h9.6 M1296.5 1020.8 h9.6" stroke="#4a5062" stroke-width="1.2" stroke-dasharray="1.4 1"/><path d="M1298 1023.6 h6.6" stroke="#4a5062" stroke-width="1.4"/><circle cx="1324" cy="1017.5" r="3" fill="#4a5062"/><path d="M1318 1023.5 q6 -5 12 0 l-1.5 2.2 v2.3 h-9 v-2.3 z" fill="#4a5062"/><g fill="#4a5062"><rect x="1338" y="1014.5" width="6" height="6" rx="2.6"/><rect x="1345" y="1014.5" width="6" height="6" rx="2.6"/><rect x="1338" y="1021.5" width="6" height="6" rx="2.6"/><rect x="1345" y="1021.5" width="6" height="6" rx="2.6"/></g></svg>
<div class="t " style="left:1227px;top:1013px;color:#4a5062;font-size:15px;font-weight:bold;">五</div>
<div class="t " style="left:1358px;top:1022px;color:#d8d8d8;font-size:12px;text-decoration:underline;">2</div>
<div class="t " style="left:1754px;top:1019px;color:#d8d8d8;font-size:12px;">7x24</div>
<svg width="1920" height="1042" viewBox="0 0 1920 1042"><defs><linearGradient id="ig" x1="0" y1="0" x2="0" y2="1"><stop offset="0" stop-color="#b2b7c1"/><stop offset="1" stop-color="#868b96"/></linearGradient></defs><rect x="1798" y="1020" width="15" height="12" rx="2.2" fill="url(#ig)"/><path d="M1800.7 1023.4 h9.6 M1800.7 1025.4 h9.6" stroke="#1b1f27" stroke-width="1" stroke-dasharray="1 1.05"/><path d="M1801.2 1028.4 h8.7" stroke="#1b1f27" stroke-width="1"/><rect x="1828" y="1020" width="15" height="9.8" rx="2" fill="url(#ig)"/><path d="M1830 1025 h2.6 l1 -1.8 l1.6 3.4 l1.2 -1.8 h4.2" stroke="#1b1f27" stroke-width="0.9" fill="none"/><path d="M1835.5 1029.5 v2 M1832 1031.6 h7" stroke="#9aa0ab" stroke-width="1.1"/><path d="M1860.6 1019.2 L1872.1 1029.6 A7.8 7.8 0 0 1 1860.6 1019.2 Z" fill="url(#ig)"/><path d="M1866 1024.8 L1869 1022" stroke="#a8adb7" stroke-width="1"/><circle cx="1869.2" cy="1021.8" r="1.1" fill="#b2b7c1"/><path d="M1862.6 1029.5 L1861.4 1033.4 M1858 1033.5 h6.8" stroke="#8f949f" stroke-width="1.3" fill="none"/><circle cx="1895.5" cy="1026.4" r="7.6" fill="url(#ig)"/><path d="M1897.3 1022 l-4.4 4.9 h2.9 l-1.6 4 l4.6 -5.2 h-2.9 z" fill="#1b1f27"/></svg>
<div style="position:absolute;left:0;top:50px;width:1686px;height:896px;overflow:hidden;pointer-events:none;"><div style="position:absolute;left:0;top:-50px;"><div class="wm" style="left:-249.3px;top:-24.2px;">www.cfchi.com</div><div class="wm" style="left:-4.0px;top:-24.2px;">www.cfchi.com</div><div class="wm" style="left:241.3px;top:-24.2px;">www.cfchi.com</div><div class="wm" style="left:486.6px;top:-24.2px;">www.cfchi.com</div><div class="wm" style="left:731.9px;top:-24.2px;">www.cfchi.com</div><div class="wm" style="left:977.2px;top:-24.2px;">www.cfchi.com</div><div class="wm" style="left:1222.5px;top:-24.2px;">www.cfchi.com</div><div class="wm" style="left:1467.8px;top:-24.2px;">www.cfchi.com</div><div class="wm" style="left:1713.1px;top:-24.2px;">www.cfchi.com</div><div class="wm" style="left:-249.3px;top:155.5px;">www.cfchi.com</div><div class="wm" style="left:-4.0px;top:155.5px;">www.cfchi.com</div><div class="wm" style="left:241.3px;top:155.5px;">www.cfchi.com</div><div class="wm" style="left:486.6px;top:155.5px;">www.cfchi.com</div><div class="wm" style="left:731.9px;top:155.5px;">www.cfchi.com</div><div class="wm" style="left:977.2px;top:155.5px;">www.cfchi.com</div><div class="wm" style="left:1222.5px;top:155.5px;">www.cfchi.com</div><div class="wm" style="left:1467.8px;top:155.5px;">www.cfchi.com</div><div class="wm" style="left:1713.1px;top:155.5px;">www.cfchi.com</div><div class="wm" style="left:-249.3px;top:335.2px;">www.cfchi.com</div><div class="wm" style="left:-4.0px;top:335.2px;">www.cfchi.com</div><div class="wm" style="left:241.3px;top:335.2px;">www.cfchi.com</div><div class="wm" style="left:486.6px;top:335.2px;">www.cfchi.com</div><div class="wm" style="left:731.9px;top:335.2px;">www.cfchi.com</div><div class="wm" style="left:977.2px;top:335.2px;">www.cfchi.com</div><div class="wm" style="left:1222.5px;top:335.2px;">www.cfchi.com</div><div class="wm" style="left:1467.8px;top:335.2px;">www.cfchi.com</div><div class="wm" style="left:1713.1px;top:335.2px;">www.cfchi.com</div><div class="wm" style="left:-249.3px;top:514.9px;">www.cfchi.com</div><div class="wm" style="left:-4.0px;top:514.9px;">www.cfchi.com</div><div class="wm" style="left:241.3px;top:514.9px;">www.cfchi.com</div><div class="wm" style="left:486.6px;top:514.9px;">www.cfchi.com</div><div class="wm" style="left:731.9px;top:514.9px;">www.cfchi.com</div><div class="wm" style="left:977.2px;top:514.9px;">www.cfchi.com</div><div class="wm" style="left:1222.5px;top:514.9px;">www.cfchi.com</div><div class="wm" style="left:1467.8px;top:514.9px;">www.cfchi.com</div><div class="wm" style="left:1713.1px;top:514.9px;">www.cfchi.com</div><div class="wm" style="left:-249.3px;top:694.6px;">www.cfchi.com</div><div class="wm" style="left:-4.0px;top:694.6px;">www.cfchi.com</div><div class="wm" style="left:241.3px;top:694.6px;">www.cfchi.com</div><div class="wm" style="left:486.6px;top:694.6px;">www.cfchi.com</div><div class="wm" style="left:731.9px;top:694.6px;">www.cfchi.com</div><div class="wm" style="left:977.2px;top:694.6px;">www.cfchi.com</div><div class="wm" style="left:1222.5px;top:694.6px;">www.cfchi.com</div><div class="wm" style="left:1467.8px;top:694.6px;">www.cfchi.com</div><div class="wm" style="left:1713.1px;top:694.6px;">www.cfchi.com</div><div class="wm" style="left:-249.3px;top:874.3px;">www.cfchi.com</div><div class="wm" style="left:-4.0px;top:874.3px;">www.cfchi.com</div><div class="wm" style="left:241.3px;top:874.3px;">www.cfchi.com</div><div class="wm" style="left:486.6px;top:874.3px;">www.cfchi.com</div><div class="wm" style="left:731.9px;top:874.3px;">www.cfchi.com</div><div class="wm" style="left:977.2px;top:874.3px;">www.cfchi.com</div><div class="wm" style="left:1222.5px;top:874.3px;">www.cfchi.com</div><div class="wm" style="left:1467.8px;top:874.3px;">www.cfchi.com</div><div class="wm" style="left:1713.1px;top:874.3px;">www.cfchi.com</div><div class="wm" style="left:-249.3px;top:1054.0px;">www.cfchi.com</div><div class="wm" style="left:-4.0px;top:1054.0px;">www.cfchi.com</div><div class="wm" style="left:241.3px;top:1054.0px;">www.cfchi.com</div><div class="wm" style="left:486.6px;top:1054.0px;">www.cfchi.com</div><div class="wm" style="left:731.9px;top:1054.0px;">www.cfchi.com</div><div class="wm" style="left:977.2px;top:1054.0px;">www.cfchi.com</div><div class="wm" style="left:1222.5px;top:1054.0px;">www.cfchi.com</div><div class="wm" style="left:1467.8px;top:1054.0px;">www.cfchi.com</div><div class="wm" style="left:1713.1px;top:1054.0px;">www.cfchi.com</div></div></div><div style="position:absolute;left:1687px;top:28px;width:233px;height:942px;overflow:hidden;pointer-events:none;"><div style="position:absolute;left:-1687px;top:-28px;"><div class="wm" style="left:-249.3px;top:-24.2px;">www.cfchi.com</div><div class="wm" style="left:-4.0px;top:-24.2px;">www.cfchi.com</div><div class="wm" style="left:241.3px;top:-24.2px;">www.cfchi.com</div><div class="wm" style="left:486.6px;top:-24.2px;">www.cfchi.com</div><div class="wm" style="left:731.9px;top:-24.2px;">www.cfchi.com</div><div class="wm" style="left:977.2px;top:-24.2px;">www.cfchi.com</div><div class="wm" style="left:1222.5px;top:-24.2px;">www.cfchi.com</div><div class="wm" style="left:1467.8px;top:-24.2px;">www.cfchi.com</div><div class="wm" style="left:1713.1px;top:-24.2px;">www.cfchi.com</div><div class="wm" style="left:-249.3px;top:155.5px;">www.cfchi.com</div><div class="wm" style="left:-4.0px;top:155.5px;">www.cfchi.com</div><div class="wm" style="left:241.3px;top:155.5px;">www.cfchi.com</div><div class="wm" style="left:486.6px;top:155.5px;">www.cfchi.com</div><div class="wm" style="left:731.9px;top:155.5px;">www.cfchi.com</div><div class="wm" style="left:977.2px;top:155.5px;">www.cfchi.com</div><div class="wm" style="left:1222.5px;top:155.5px;">www.cfchi.com</div><div class="wm" style="left:1467.8px;top:155.5px;">www.cfchi.com</div><div class="wm" style="left:1713.1px;top:155.5px;">www.cfchi.com</div><div class="wm" style="left:-249.3px;top:335.2px;">www.cfchi.com</div><div class="wm" style="left:-4.0px;top:335.2px;">www.cfchi.com</div><div class="wm" style="left:241.3px;top:335.2px;">www.cfchi.com</div><div class="wm" style="left:486.6px;top:335.2px;">www.cfchi.com</div><div class="wm" style="left:731.9px;top:335.2px;">www.cfchi.com</div><div class="wm" style="left:977.2px;top:335.2px;">www.cfchi.com</div><div class="wm" style="left:1222.5px;top:335.2px;">www.cfchi.com</div><div class="wm" style="left:1467.8px;top:335.2px;">www.cfchi.com</div><div class="wm" style="left:1713.1px;top:335.2px;">www.cfchi.com</div><div class="wm" style="left:-249.3px;top:514.9px;">www.cfchi.com</div><div class="wm" style="left:-4.0px;top:514.9px;">www.cfchi.com</div><div class="wm" style="left:241.3px;top:514.9px;">www.cfchi.com</div><div class="wm" style="left:486.6px;top:514.9px;">www.cfchi.com</div><div class="wm" style="left:731.9px;top:514.9px;">www.cfchi.com</div><div class="wm" style="left:977.2px;top:514.9px;">www.cfchi.com</div><div class="wm" style="left:1222.5px;top:514.9px;">www.cfchi.com</div><div class="wm" style="left:1467.8px;top:514.9px;">www.cfchi.com</div><div class="wm" style="left:1713.1px;top:514.9px;">www.cfchi.com</div><div class="wm" style="left:-249.3px;top:694.6px;">www.cfchi.com</div><div class="wm" style="left:-4.0px;top:694.6px;">www.cfchi.com</div><div class="wm" style="left:241.3px;top:694.6px;">www.cfchi.com</div><div class="wm" style="left:486.6px;top:694.6px;">www.cfchi.com</div><div class="wm" style="left:731.9px;top:694.6px;">www.cfchi.com</div><div class="wm" style="left:977.2px;top:694.6px;">www.cfchi.com</div><div class="wm" style="left:1222.5px;top:694.6px;">www.cfchi.com</div><div class="wm" style="left:1467.8px;top:694.6px;">www.cfchi.com</div><div class="wm" style="left:1713.1px;top:694.6px;">www.cfchi.com</div><div class="wm" style="left:-249.3px;top:874.3px;">www.cfchi.com</div><div class="wm" style="left:-4.0px;top:874.3px;">www.cfchi.com</div><div class="wm" style="left:241.3px;top:874.3px;">www.cfchi.com</div><div class="wm" style="left:486.6px;top:874.3px;">www.cfchi.com</div><div class="wm" style="left:731.9px;top:874.3px;">www.cfchi.com</div><div class="wm" style="left:977.2px;top:874.3px;">www.cfchi.com</div><div class="wm" style="left:1222.5px;top:874.3px;">www.cfchi.com</div><div class="wm" style="left:1467.8px;top:874.3px;">www.cfchi.com</div><div class="wm" style="left:1713.1px;top:874.3px;">www.cfchi.com</div><div class="wm" style="left:-249.3px;top:1054.0px;">www.cfchi.com</div><div class="wm" style="left:-4.0px;top:1054.0px;">www.cfchi.com</div><div class="wm" style="left:241.3px;top:1054.0px;">www.cfchi.com</div><div class="wm" style="left:486.6px;top:1054.0px;">www.cfchi.com</div><div class="wm" style="left:731.9px;top:1054.0px;">www.cfchi.com</div><div class="wm" style="left:977.2px;top:1054.0px;">www.cfchi.com</div><div class="wm" style="left:1222.5px;top:1054.0px;">www.cfchi.com</div><div class="wm" style="left:1467.8px;top:1054.0px;">www.cfchi.com</div><div class="wm" style="left:1713.1px;top:1054.0px;">www.cfchi.com</div></div></div>
</body></html>
